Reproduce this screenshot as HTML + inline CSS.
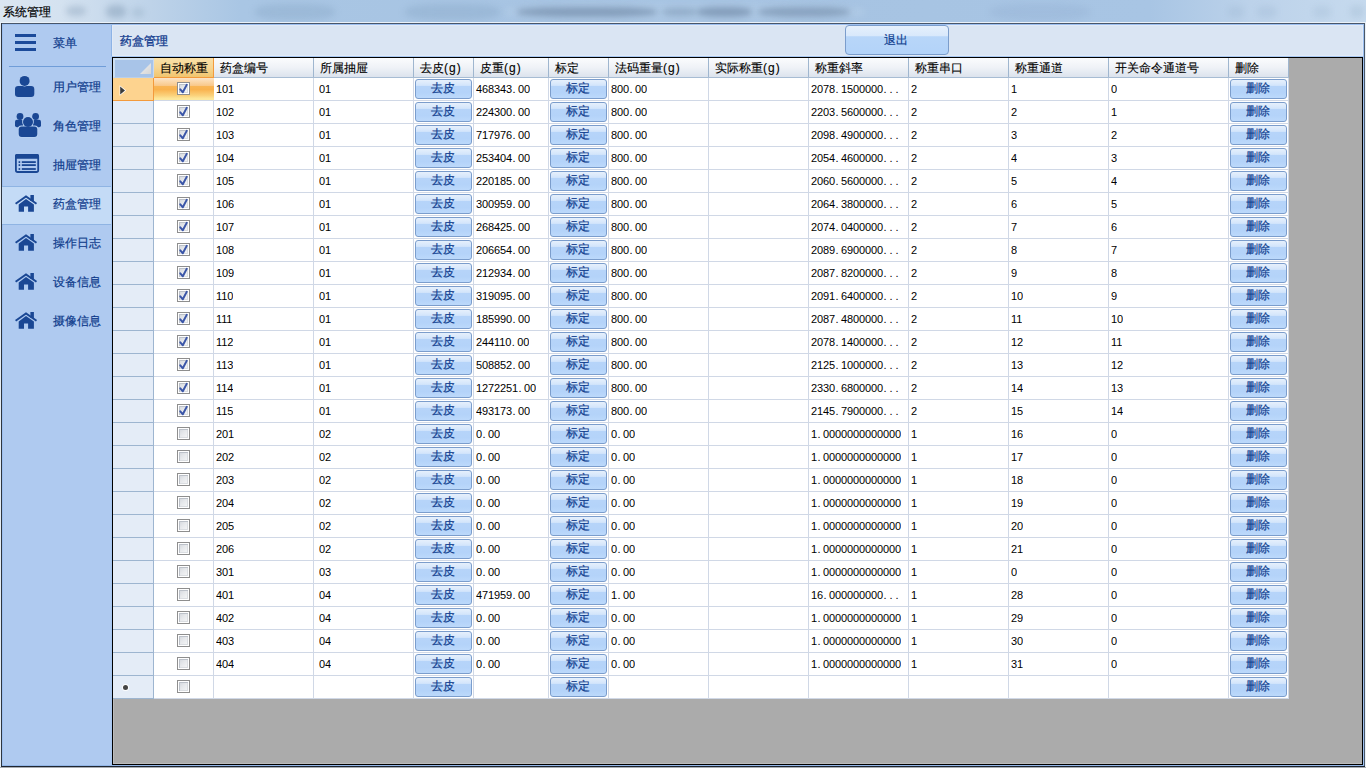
<!DOCTYPE html><html><head><meta charset="utf-8"><style>
*{margin:0;padding:0;box-sizing:border-box}
html,body{width:1366px;height:768px;overflow:hidden}
body{position:relative;background:#a9c5e4;font-family:"Liberation Sans",sans-serif;font-size:12px;color:#000}
.abs{position:absolute}
#title{left:0;top:0;width:1366px;height:22px;background:linear-gradient(90deg,#dbe6f1 0px,#d4e2f0 60px,#bed3e9 150px,#a9c6e4 240px,#a6c3e2 700px,#a8c5e4 1150px,#bcd2ea 1250px,#c6daee 1366px)}
.blob{position:absolute;filter:blur(3px);border-radius:40%}
.cj{-webkit-text-stroke:0.2px currentColor}
#ttxt{left:3px;top:5px;font-size:12px;line-height:14px;color:#000;-webkit-text-stroke:0.2px #000}
#win{left:0;top:22px;width:1366px;height:746px;}
.sb{background:#afcaf0}
.mi{position:absolute;left:2px;width:109px;height:39px}
.mt{position:absolute;left:53px;font-size:12px;line-height:14px;color:#103c8c;-webkit-text-stroke:0.2px #103c8c}
.grid{background:#ababab}
.cell{position:absolute;overflow:hidden;white-space:nowrap}
.num{font-family:"Liberation Sans",sans-serif;font-size:11px;letter-spacing:-0.12px}.num b{display:inline-block;width:6px;font-weight:normal;padding-left:0.5px}
.btn{position:absolute;border:1px solid #7b9dcc;border-radius:3px;background:linear-gradient(#e6f0fc 0%,#d3e5fb 30%,#b6d4f9 36%,#b4d3f9 70%,#bcd9fb 100%);color:#12408f;text-align:center;font-size:12px;line-height:17px;padding-right:2px;-webkit-text-stroke:0.2px #12408f}
.cb{position:absolute;width:13px;height:13px;border:1px solid #8e8e8e;background:#fff}.cb i{position:absolute;left:1px;top:1px;width:9px;height:9px;background:linear-gradient(135deg,#d2d6dc 0%,#e6e8eb 45%,#f6f7f8 100%);box-shadow:inset 1px 1px 0 #bcc1c9,inset -1px -1px 0 #dadde1}
.hd{position:absolute;top:58px;height:19px;background:linear-gradient(#fbfcfd 0%,#eff2f7 50%,#dce3ed 100%);font-size:12px;line-height:21px;padding-left:6px;color:#000;-webkit-text-stroke:0.12px #000}.hd s{text-decoration:none;letter-spacing:1.1px}
</style></head><body>

<div class="abs" id="title"></div>
<div class="blob" style="left:66px;top:6px;width:20px;height:10px;background:rgba(90,120,150,0.25)"></div>
<div class="blob" style="left:106px;top:5px;width:20px;height:13px;background:rgba(90,120,150,0.3)"></div>
<div class="blob" style="left:132px;top:8px;width:12px;height:9px;background:rgba(90,120,150,0.18)"></div>
<div class="blob" style="left:255px;top:4px;width:80px;height:16px;background:rgba(120,150,185,0.25)"></div>
<div class="blob" style="left:405px;top:4px;width:95px;height:16px;background:rgba(120,150,185,0.25)"></div>
<div class="blob" style="left:990px;top:4px;width:100px;height:16px;background:rgba(120,150,185,0.15)"></div>
<div class="blob" style="left:505px;top:3px;width:360px;height:18px;background:rgba(200,220,240,0.25)"></div>
<div class="blob" style="left:517px;top:7px;width:140px;height:10px;background:rgba(80,105,135,0.45)"></div>
<div class="blob" style="left:662px;top:8px;width:35px;height:8px;background:rgba(80,105,135,0.3)"></div>
<div class="blob" style="left:697px;top:7px;width:55px;height:10px;background:rgba(80,105,135,0.45)"></div>
<div class="blob" style="left:758px;top:7px;width:92px;height:10px;background:rgba(80,105,135,0.4)"></div>
<div class="blob" style="left:1228px;top:6px;width:16px;height:12px;background:rgba(110,140,170,0.12)"></div>
<div class="blob" style="left:1257px;top:6px;width:20px;height:12px;background:rgba(110,140,170,0.12)"></div>
<div class="blob" style="left:1313px;top:6px;width:18px;height:12px;background:rgba(110,140,170,0.12)"></div>
<div class="blob" style="left:1350px;top:5px;width:14px;height:13px;background:rgba(110,140,170,0.15)"></div>
<div class="abs" id="ttxt">系统管理</div>
<div class="abs" style="left:0px;top:22px;width:1366px;height:1px;background:#eaf1f8"></div>
<div class="abs" style="left:0px;top:23px;width:1px;height:745px;background:#e4ecf4"></div>
<div class="abs" style="left:1365px;top:23px;width:1px;height:745px;background:#e8f0f8"></div>
<div class="abs" style="left:1px;top:23px;width:1364px;height:1px;background:#48566a"></div>
<div class="abs" style="left:1px;top:23px;width:1px;height:744px;background:#2d3540"></div>
<div class="abs" style="left:1364px;top:23px;width:1px;height:744px;background:#4a5868"></div>
<div class="abs" style="left:1px;top:766px;width:1364px;height:1px;background:#1e2530"></div>
<div class="abs" style="left:0px;top:767px;width:1366px;height:1px;background:#a9adb2"></div>
<div class="abs sb" style="left:2px;top:24px;width:1362px;height:742px"></div>
<div class="abs" style="left:2px;top:24px;width:1362px;height:1px;background:#9cbff0"></div>
<div class="abs" style="left:2px;top:24px;width:1px;height:742px;background:#9cbff0"></div>
<div class="abs" style="left:1363px;top:24px;width:1px;height:742px;background:#9cbff0"></div>
<div class="abs" style="left:2px;top:765px;width:1362px;height:1px;background:#92b6e8"></div>
<div class="abs" style="left:111px;top:25px;width:1px;height:31px;background:#8db3e6"></div>
<div class="abs" style="left:111px;top:56px;width:1px;height:709px;background:#a6c6f2"></div>
<div class="abs" style="left:15px;top:34px;width:21px;height:3px;background:#1b4a9a"></div>
<div class="abs" style="left:15px;top:41px;width:21px;height:3px;background:#1b4a9a"></div>
<div class="abs" style="left:15px;top:48px;width:21px;height:3px;background:#1b4a9a"></div>
<div class="abs mt" style="left:53px;top:36px">菜单</div>
<div class="abs" style="left:9px;top:66px;width:97px;height:1px;background:#709dd8"></div>
<div class="abs" style="left:2px;top:186px;width:109px;height:39px;background:#c4dbf6"></div>
<div class="abs" style="left:2px;top:186px;width:109px;height:1px;background:#8fb4e3"></div>
<div class="abs" style="left:2px;top:224px;width:109px;height:1px;background:#8fb4e3"></div>
<div class="abs mt" style="top:80px">用户管理</div>
<div class="abs mt" style="top:119px">角色管理</div>
<div class="abs mt" style="top:158px">抽屉管理</div>
<div class="abs mt" style="top:197px">药盒管理</div>
<div class="abs mt" style="top:236px">操作日志</div>
<div class="abs mt" style="top:275px">设备信息</div>
<div class="abs mt" style="top:314px">摄像信息</div>
<svg class="abs" style="left:0;top:0" width="112" height="340" viewBox="0 0 112 340"><rect x="15" y="86" width="19.3" height="11" rx="3.2" fill="#1a4794"/><circle cx="24.6" cy="80.9" r="5.6" fill="#b9d2f2"/><circle cx="24.6" cy="80.9" r="5" fill="#1a4794"/><circle cx="20" cy="116.5" r="3.4" fill="#1a4794"/><circle cx="35.6" cy="116.5" r="3.4" fill="#1a4794"/><rect x="15" y="119.8" width="8" height="7.4" rx="2" fill="#1a4794"/><rect x="33" y="119.8" width="8" height="7.4" rx="2" fill="#1a4794"/><circle cx="28" cy="122" r="5.8" fill="#b9d2f2"/><rect x="17.8" y="125.6" width="20.4" height="12.2" rx="3.5" fill="#b9d2f2"/><circle cx="28" cy="122" r="5" fill="#1a4794"/><rect x="18.7" y="126.5" width="18.6" height="10.6" rx="3" fill="#1a4794"/><rect x="15.9" y="154.8" width="22.3" height="17.2" rx="1.8" fill="none" stroke="#1a4794" stroke-width="1.8"/><rect x="15" y="153.9" width="24" height="4.8" rx="1.5" fill="#1a4794"/><rect x="18.6" y="161.2" width="1.6" height="1.8" fill="#1a4794"/><rect x="21.8" y="161.2" width="14" height="1.8" fill="#1a4794"/><rect x="18.6" y="164.2" width="1.6" height="1.8" fill="#1a4794"/><rect x="21.8" y="164.2" width="14" height="1.8" fill="#1a4794"/><rect x="18.6" y="168.1" width="1.6" height="1.8" fill="#1a4794"/><rect x="21.8" y="168.1" width="14" height="1.8" fill="#1a4794"/><path d="M15.6 203.7 L26 196.5 L36.5 203.7" fill="none" stroke="#1a4794" stroke-width="2"/><rect x="30.4" y="195" width="3.5" height="6" fill="#1a4794"/><path d="M26 199 L33.9 204.6 L33.9 211.8 L28.1 211.8 L28.1 206.6 L24 206.6 L24 211.8 L18.7 211.8 L18.7 204.6 Z" fill="#1a4794"/><path d="M15.6 242.7 L26 235.5 L36.5 242.7" fill="none" stroke="#1a4794" stroke-width="2"/><rect x="30.4" y="234" width="3.5" height="6" fill="#1a4794"/><path d="M26 238 L33.9 243.6 L33.9 250.8 L28.1 250.8 L28.1 245.6 L24 245.6 L24 250.8 L18.7 250.8 L18.7 243.6 Z" fill="#1a4794"/><path d="M15.6 281.7 L26 274.5 L36.5 281.7" fill="none" stroke="#1a4794" stroke-width="2"/><rect x="30.4" y="273" width="3.5" height="6" fill="#1a4794"/><path d="M26 277 L33.9 282.6 L33.9 289.8 L28.1 289.8 L28.1 284.6 L24 284.6 L24 289.8 L18.7 289.8 L18.7 282.6 Z" fill="#1a4794"/><path d="M15.6 320.7 L26 313.5 L36.5 320.7" fill="none" stroke="#1a4794" stroke-width="2"/><rect x="30.4" y="312" width="3.5" height="6" fill="#1a4794"/><path d="M26 316 L33.9 321.6 L33.9 328.8 L28.1 328.8 L28.1 323.6 L24 323.6 L24 328.8 L18.7 328.8 L18.7 321.6 Z" fill="#1a4794"/></svg>
<div class="abs" style="left:112px;top:25px;width:1251px;height:31px;background:#dae5f3"></div>
<div class="abs" style="left:112px;top:25px;width:1251px;height:1px;background:#e2eaf5"></div>
<div class="abs" style="left:112px;top:25px;width:1px;height:31px;background:#e2eaf5"></div>
<div class="abs" style="left:1362px;top:25px;width:1px;height:31px;background:#e2eaf5"></div>
<div class="abs" style="left:112px;top:55px;width:1251px;height:1px;background:#e2eaf5"></div>
<div class="abs" style="left:112px;top:56px;width:1251px;height:1px;background:#a8c8f2"></div>
<div class="abs" style="left:120px;top:34px;font-size:12px;line-height:14px;color:#173f90;-webkit-text-stroke:0.35px #173f90">药盒管理</div>
<div class="btn" style="left:845px;top:25px;width:104px;height:30px;line-height:28px;border-radius:4px;background:linear-gradient(#e6f0fc 0%,#d8e8fb 36%,#b8d6f9 38%,#b3d3f9 100%)">退出</div>
<div class="abs grid" style="left:112px;top:57px;width:1251px;height:708px;border:1px solid #000"></div>
<div class="abs" style="left:113px;top:58px;width:1px;height:706px;background:#bcbcbc"></div>
<div class="abs" style="left:113px;top:763px;width:1249px;height:1px;background:#bcbcbc"></div>
<div class="abs" style="left:113px;top:58px;width:41px;height:20px;background:#a8c4e8;border-left:2px solid #cddff1;border-top:2px solid #cddff1;border-right:1px solid #c7d9f1;border-bottom:1px solid #b9cfea"></div>
<svg class="abs" style="left:140px;top:63px" width="11" height="11"><defs><linearGradient id="tg" x1="0" y1="0" x2="1" y2="1"><stop offset="0" stop-color="#f0f0f0"/><stop offset="1" stop-color="#d6d6d6"/></linearGradient></defs><path d="M11 0 L11 11 L0 11Z" fill="url(#tg)"/></svg>
<div class="hd" style="left:154px;width:60px;background:linear-gradient(#f9e0a8 0%,#f7d692 50%,#f1c56f 100%);border-right:1px solid #f39a3c;border-bottom:1px solid #f39a3c;height:20px">自动称重</div>
<div class="hd" style="left:214px;width:99px">药盒编号</div>
<div class="abs" style="left:313px;top:58px;width:1px;height:19px;background:#9fb6cf"></div>
<div class="hd" style="left:314px;width:99px">所属抽屉</div>
<div class="abs" style="left:413px;top:58px;width:1px;height:19px;background:#9fb6cf"></div>
<div class="hd" style="left:414px;width:59px">去皮<s>(g)</s></div>
<div class="abs" style="left:473px;top:58px;width:1px;height:19px;background:#9fb6cf"></div>
<div class="hd" style="left:474px;width:74px">皮重<s>(g)</s></div>
<div class="abs" style="left:548px;top:58px;width:1px;height:19px;background:#9fb6cf"></div>
<div class="hd" style="left:549px;width:59px">标定</div>
<div class="abs" style="left:608px;top:58px;width:1px;height:19px;background:#9fb6cf"></div>
<div class="hd" style="left:609px;width:99px">法码重量<s>(g)</s></div>
<div class="abs" style="left:708px;top:58px;width:1px;height:19px;background:#9fb6cf"></div>
<div class="hd" style="left:709px;width:99px">实际称重<s>(g)</s></div>
<div class="abs" style="left:808px;top:58px;width:1px;height:19px;background:#9fb6cf"></div>
<div class="hd" style="left:809px;width:99px">称重斜率</div>
<div class="abs" style="left:908px;top:58px;width:1px;height:19px;background:#9fb6cf"></div>
<div class="hd" style="left:909px;width:99px">称重串口</div>
<div class="abs" style="left:1008px;top:58px;width:1px;height:19px;background:#9fb6cf"></div>
<div class="hd" style="left:1009px;width:99px">称重通道</div>
<div class="abs" style="left:1108px;top:58px;width:1px;height:19px;background:#9fb6cf"></div>
<div class="hd" style="left:1109px;width:119px">开关命令通道号</div>
<div class="abs" style="left:1228px;top:58px;width:1px;height:19px;background:#9fb6cf"></div>
<div class="hd" style="left:1229px;width:59px">删除</div>
<div class="abs" style="left:1288px;top:58px;width:1px;height:19px;background:#9fb6cf"></div>
<div class="abs" style="left:214px;top:77px;width:1075px;height:1px;background:#a7bcd3"></div>
<div class="abs" style="left:113px;top:78px;width:41px;height:23px;background:#fdd38f;border-right:1px solid #f39a3c;border-bottom:1px solid #f39a3c"></div>
<svg class="abs" style="left:118px;top:84px" width="10" height="14"><path d="M1.6 1.2 L8.2 6.5 L1.6 11.8Z" fill="#fff"/><path d="M2.2 2.4 L7 6.5 L2.2 10.6Z" fill="#3b3b3b"/></svg>
<div class="abs" style="left:154px;top:78px;width:60px;height:22px;background:linear-gradient(#fce4c8 0%,#fbd9ad 15%,#f9c98c 34%,#f9b656 38%,#f9b24e 52%,#fbd27c 80%,#fde597 92%,#fde99f 100%)"></div>
<div class="abs" style="left:214px;top:78px;width:1074px;height:22px;background:#fff"></div>
<div class="abs" style="left:154px;top:100px;width:1134px;height:1px;background:#d0d8e6"></div>
<div class="abs" style="left:213px;top:100px;width:1px;height:1px;background:#d0d8e6"></div>
<div class="abs" style="left:313px;top:78px;width:1px;height:23px;background:#d0d8e6"></div>
<div class="abs" style="left:413px;top:78px;width:1px;height:23px;background:#d0d8e6"></div>
<div class="abs" style="left:473px;top:78px;width:1px;height:23px;background:#d0d8e6"></div>
<div class="abs" style="left:548px;top:78px;width:1px;height:23px;background:#d0d8e6"></div>
<div class="abs" style="left:608px;top:78px;width:1px;height:23px;background:#d0d8e6"></div>
<div class="abs" style="left:708px;top:78px;width:1px;height:23px;background:#d0d8e6"></div>
<div class="abs" style="left:808px;top:78px;width:1px;height:23px;background:#d0d8e6"></div>
<div class="abs" style="left:908px;top:78px;width:1px;height:23px;background:#d0d8e6"></div>
<div class="abs" style="left:1008px;top:78px;width:1px;height:23px;background:#d0d8e6"></div>
<div class="abs" style="left:1108px;top:78px;width:1px;height:23px;background:#d0d8e6"></div>
<div class="abs" style="left:1228px;top:78px;width:1px;height:23px;background:#d0d8e6"></div>
<div class="abs" style="left:1288px;top:78px;width:1px;height:23px;background:#d0d8e6"></div>
<div class="cb" style="left:177px;top:82px"><i></i></div>
<svg class="abs" style="left:178px;top:83px" width="11" height="11"><path d="M2.3 6.3 L4.8 9.3 L8.7 1.9" fill="none" stroke="#3b56a8" stroke-width="2" stroke-linecap="round" stroke-linejoin="round"/></svg>
<div class="btn" style="left:415px;top:79px;width:57px;height:20px">去皮</div>
<div class="btn" style="left:550px;top:79px;width:57px;height:20px">标定</div>
<div class="btn" style="left:1230px;top:79px;width:57px;height:20px">删除</div>
<div class="cell num" style="left:216px;top:83px;line-height:13px">101</div>
<div class="cell num" style="left:319px;top:83px;line-height:13px">01</div>
<div class="cell num" style="left:476px;top:83px;line-height:13px">468343<b>.</b>00</div>
<div class="cell num" style="left:611px;top:83px;line-height:13px">800<b>.</b>00</div>
<div class="cell num" style="left:811px;top:83px;line-height:13px">2078<b>.</b>1500000<b>.</b><b>.</b><b>.</b></div>
<div class="cell num" style="left:911px;top:83px;line-height:13px">2</div>
<div class="cell num" style="left:1011px;top:83px;line-height:13px">1</div>
<div class="cell num" style="left:1111px;top:83px;line-height:13px">0</div>
<div class="abs" style="left:113px;top:101px;width:40px;height:22px;background:#e4ecf7"></div>
<div class="abs" style="left:113px;top:123px;width:40px;height:1px;background:#9db5d0"></div>
<div class="abs" style="left:153px;top:101px;width:1px;height:23px;background:#9db5d0"></div>
<div class="abs" style="left:154px;top:101px;width:59px;height:22px;background:#fff"></div>
<div class="abs" style="left:214px;top:101px;width:1074px;height:22px;background:#fff"></div>
<div class="abs" style="left:154px;top:123px;width:1134px;height:1px;background:#d0d8e6"></div>
<div class="abs" style="left:213px;top:101px;width:1px;height:23px;background:#d0d8e6"></div>
<div class="abs" style="left:313px;top:101px;width:1px;height:23px;background:#d0d8e6"></div>
<div class="abs" style="left:413px;top:101px;width:1px;height:23px;background:#d0d8e6"></div>
<div class="abs" style="left:473px;top:101px;width:1px;height:23px;background:#d0d8e6"></div>
<div class="abs" style="left:548px;top:101px;width:1px;height:23px;background:#d0d8e6"></div>
<div class="abs" style="left:608px;top:101px;width:1px;height:23px;background:#d0d8e6"></div>
<div class="abs" style="left:708px;top:101px;width:1px;height:23px;background:#d0d8e6"></div>
<div class="abs" style="left:808px;top:101px;width:1px;height:23px;background:#d0d8e6"></div>
<div class="abs" style="left:908px;top:101px;width:1px;height:23px;background:#d0d8e6"></div>
<div class="abs" style="left:1008px;top:101px;width:1px;height:23px;background:#d0d8e6"></div>
<div class="abs" style="left:1108px;top:101px;width:1px;height:23px;background:#d0d8e6"></div>
<div class="abs" style="left:1228px;top:101px;width:1px;height:23px;background:#d0d8e6"></div>
<div class="abs" style="left:1288px;top:101px;width:1px;height:23px;background:#d0d8e6"></div>
<div class="cb" style="left:177px;top:105px"><i></i></div>
<svg class="abs" style="left:178px;top:106px" width="11" height="11"><path d="M2.3 6.3 L4.8 9.3 L8.7 1.9" fill="none" stroke="#3b56a8" stroke-width="2" stroke-linecap="round" stroke-linejoin="round"/></svg>
<div class="btn" style="left:415px;top:102px;width:57px;height:20px">去皮</div>
<div class="btn" style="left:550px;top:102px;width:57px;height:20px">标定</div>
<div class="btn" style="left:1230px;top:102px;width:57px;height:20px">删除</div>
<div class="cell num" style="left:216px;top:106px;line-height:13px">102</div>
<div class="cell num" style="left:319px;top:106px;line-height:13px">01</div>
<div class="cell num" style="left:476px;top:106px;line-height:13px">224300<b>.</b>00</div>
<div class="cell num" style="left:611px;top:106px;line-height:13px">800<b>.</b>00</div>
<div class="cell num" style="left:811px;top:106px;line-height:13px">2203<b>.</b>5600000<b>.</b><b>.</b><b>.</b></div>
<div class="cell num" style="left:911px;top:106px;line-height:13px">2</div>
<div class="cell num" style="left:1011px;top:106px;line-height:13px">2</div>
<div class="cell num" style="left:1111px;top:106px;line-height:13px">1</div>
<div class="abs" style="left:113px;top:124px;width:40px;height:22px;background:#e4ecf7"></div>
<div class="abs" style="left:113px;top:146px;width:40px;height:1px;background:#9db5d0"></div>
<div class="abs" style="left:153px;top:124px;width:1px;height:23px;background:#9db5d0"></div>
<div class="abs" style="left:154px;top:124px;width:59px;height:22px;background:#fff"></div>
<div class="abs" style="left:214px;top:124px;width:1074px;height:22px;background:#fff"></div>
<div class="abs" style="left:154px;top:146px;width:1134px;height:1px;background:#d0d8e6"></div>
<div class="abs" style="left:213px;top:124px;width:1px;height:23px;background:#d0d8e6"></div>
<div class="abs" style="left:313px;top:124px;width:1px;height:23px;background:#d0d8e6"></div>
<div class="abs" style="left:413px;top:124px;width:1px;height:23px;background:#d0d8e6"></div>
<div class="abs" style="left:473px;top:124px;width:1px;height:23px;background:#d0d8e6"></div>
<div class="abs" style="left:548px;top:124px;width:1px;height:23px;background:#d0d8e6"></div>
<div class="abs" style="left:608px;top:124px;width:1px;height:23px;background:#d0d8e6"></div>
<div class="abs" style="left:708px;top:124px;width:1px;height:23px;background:#d0d8e6"></div>
<div class="abs" style="left:808px;top:124px;width:1px;height:23px;background:#d0d8e6"></div>
<div class="abs" style="left:908px;top:124px;width:1px;height:23px;background:#d0d8e6"></div>
<div class="abs" style="left:1008px;top:124px;width:1px;height:23px;background:#d0d8e6"></div>
<div class="abs" style="left:1108px;top:124px;width:1px;height:23px;background:#d0d8e6"></div>
<div class="abs" style="left:1228px;top:124px;width:1px;height:23px;background:#d0d8e6"></div>
<div class="abs" style="left:1288px;top:124px;width:1px;height:23px;background:#d0d8e6"></div>
<div class="cb" style="left:177px;top:128px"><i></i></div>
<svg class="abs" style="left:178px;top:129px" width="11" height="11"><path d="M2.3 6.3 L4.8 9.3 L8.7 1.9" fill="none" stroke="#3b56a8" stroke-width="2" stroke-linecap="round" stroke-linejoin="round"/></svg>
<div class="btn" style="left:415px;top:125px;width:57px;height:20px">去皮</div>
<div class="btn" style="left:550px;top:125px;width:57px;height:20px">标定</div>
<div class="btn" style="left:1230px;top:125px;width:57px;height:20px">删除</div>
<div class="cell num" style="left:216px;top:129px;line-height:13px">103</div>
<div class="cell num" style="left:319px;top:129px;line-height:13px">01</div>
<div class="cell num" style="left:476px;top:129px;line-height:13px">717976<b>.</b>00</div>
<div class="cell num" style="left:611px;top:129px;line-height:13px">800<b>.</b>00</div>
<div class="cell num" style="left:811px;top:129px;line-height:13px">2098<b>.</b>4900000<b>.</b><b>.</b><b>.</b></div>
<div class="cell num" style="left:911px;top:129px;line-height:13px">2</div>
<div class="cell num" style="left:1011px;top:129px;line-height:13px">3</div>
<div class="cell num" style="left:1111px;top:129px;line-height:13px">2</div>
<div class="abs" style="left:113px;top:147px;width:40px;height:22px;background:#e4ecf7"></div>
<div class="abs" style="left:113px;top:169px;width:40px;height:1px;background:#9db5d0"></div>
<div class="abs" style="left:153px;top:147px;width:1px;height:23px;background:#9db5d0"></div>
<div class="abs" style="left:154px;top:147px;width:59px;height:22px;background:#fff"></div>
<div class="abs" style="left:214px;top:147px;width:1074px;height:22px;background:#fff"></div>
<div class="abs" style="left:154px;top:169px;width:1134px;height:1px;background:#d0d8e6"></div>
<div class="abs" style="left:213px;top:147px;width:1px;height:23px;background:#d0d8e6"></div>
<div class="abs" style="left:313px;top:147px;width:1px;height:23px;background:#d0d8e6"></div>
<div class="abs" style="left:413px;top:147px;width:1px;height:23px;background:#d0d8e6"></div>
<div class="abs" style="left:473px;top:147px;width:1px;height:23px;background:#d0d8e6"></div>
<div class="abs" style="left:548px;top:147px;width:1px;height:23px;background:#d0d8e6"></div>
<div class="abs" style="left:608px;top:147px;width:1px;height:23px;background:#d0d8e6"></div>
<div class="abs" style="left:708px;top:147px;width:1px;height:23px;background:#d0d8e6"></div>
<div class="abs" style="left:808px;top:147px;width:1px;height:23px;background:#d0d8e6"></div>
<div class="abs" style="left:908px;top:147px;width:1px;height:23px;background:#d0d8e6"></div>
<div class="abs" style="left:1008px;top:147px;width:1px;height:23px;background:#d0d8e6"></div>
<div class="abs" style="left:1108px;top:147px;width:1px;height:23px;background:#d0d8e6"></div>
<div class="abs" style="left:1228px;top:147px;width:1px;height:23px;background:#d0d8e6"></div>
<div class="abs" style="left:1288px;top:147px;width:1px;height:23px;background:#d0d8e6"></div>
<div class="cb" style="left:177px;top:151px"><i></i></div>
<svg class="abs" style="left:178px;top:152px" width="11" height="11"><path d="M2.3 6.3 L4.8 9.3 L8.7 1.9" fill="none" stroke="#3b56a8" stroke-width="2" stroke-linecap="round" stroke-linejoin="round"/></svg>
<div class="btn" style="left:415px;top:148px;width:57px;height:20px">去皮</div>
<div class="btn" style="left:550px;top:148px;width:57px;height:20px">标定</div>
<div class="btn" style="left:1230px;top:148px;width:57px;height:20px">删除</div>
<div class="cell num" style="left:216px;top:152px;line-height:13px">104</div>
<div class="cell num" style="left:319px;top:152px;line-height:13px">01</div>
<div class="cell num" style="left:476px;top:152px;line-height:13px">253404<b>.</b>00</div>
<div class="cell num" style="left:611px;top:152px;line-height:13px">800<b>.</b>00</div>
<div class="cell num" style="left:811px;top:152px;line-height:13px">2054<b>.</b>4600000<b>.</b><b>.</b><b>.</b></div>
<div class="cell num" style="left:911px;top:152px;line-height:13px">2</div>
<div class="cell num" style="left:1011px;top:152px;line-height:13px">4</div>
<div class="cell num" style="left:1111px;top:152px;line-height:13px">3</div>
<div class="abs" style="left:113px;top:170px;width:40px;height:22px;background:#e4ecf7"></div>
<div class="abs" style="left:113px;top:192px;width:40px;height:1px;background:#9db5d0"></div>
<div class="abs" style="left:153px;top:170px;width:1px;height:23px;background:#9db5d0"></div>
<div class="abs" style="left:154px;top:170px;width:59px;height:22px;background:#fff"></div>
<div class="abs" style="left:214px;top:170px;width:1074px;height:22px;background:#fff"></div>
<div class="abs" style="left:154px;top:192px;width:1134px;height:1px;background:#d0d8e6"></div>
<div class="abs" style="left:213px;top:170px;width:1px;height:23px;background:#d0d8e6"></div>
<div class="abs" style="left:313px;top:170px;width:1px;height:23px;background:#d0d8e6"></div>
<div class="abs" style="left:413px;top:170px;width:1px;height:23px;background:#d0d8e6"></div>
<div class="abs" style="left:473px;top:170px;width:1px;height:23px;background:#d0d8e6"></div>
<div class="abs" style="left:548px;top:170px;width:1px;height:23px;background:#d0d8e6"></div>
<div class="abs" style="left:608px;top:170px;width:1px;height:23px;background:#d0d8e6"></div>
<div class="abs" style="left:708px;top:170px;width:1px;height:23px;background:#d0d8e6"></div>
<div class="abs" style="left:808px;top:170px;width:1px;height:23px;background:#d0d8e6"></div>
<div class="abs" style="left:908px;top:170px;width:1px;height:23px;background:#d0d8e6"></div>
<div class="abs" style="left:1008px;top:170px;width:1px;height:23px;background:#d0d8e6"></div>
<div class="abs" style="left:1108px;top:170px;width:1px;height:23px;background:#d0d8e6"></div>
<div class="abs" style="left:1228px;top:170px;width:1px;height:23px;background:#d0d8e6"></div>
<div class="abs" style="left:1288px;top:170px;width:1px;height:23px;background:#d0d8e6"></div>
<div class="cb" style="left:177px;top:174px"><i></i></div>
<svg class="abs" style="left:178px;top:175px" width="11" height="11"><path d="M2.3 6.3 L4.8 9.3 L8.7 1.9" fill="none" stroke="#3b56a8" stroke-width="2" stroke-linecap="round" stroke-linejoin="round"/></svg>
<div class="btn" style="left:415px;top:171px;width:57px;height:20px">去皮</div>
<div class="btn" style="left:550px;top:171px;width:57px;height:20px">标定</div>
<div class="btn" style="left:1230px;top:171px;width:57px;height:20px">删除</div>
<div class="cell num" style="left:216px;top:175px;line-height:13px">105</div>
<div class="cell num" style="left:319px;top:175px;line-height:13px">01</div>
<div class="cell num" style="left:476px;top:175px;line-height:13px">220185<b>.</b>00</div>
<div class="cell num" style="left:611px;top:175px;line-height:13px">800<b>.</b>00</div>
<div class="cell num" style="left:811px;top:175px;line-height:13px">2060<b>.</b>5600000<b>.</b><b>.</b><b>.</b></div>
<div class="cell num" style="left:911px;top:175px;line-height:13px">2</div>
<div class="cell num" style="left:1011px;top:175px;line-height:13px">5</div>
<div class="cell num" style="left:1111px;top:175px;line-height:13px">4</div>
<div class="abs" style="left:113px;top:193px;width:40px;height:22px;background:#e4ecf7"></div>
<div class="abs" style="left:113px;top:215px;width:40px;height:1px;background:#9db5d0"></div>
<div class="abs" style="left:153px;top:193px;width:1px;height:23px;background:#9db5d0"></div>
<div class="abs" style="left:154px;top:193px;width:59px;height:22px;background:#fff"></div>
<div class="abs" style="left:214px;top:193px;width:1074px;height:22px;background:#fff"></div>
<div class="abs" style="left:154px;top:215px;width:1134px;height:1px;background:#d0d8e6"></div>
<div class="abs" style="left:213px;top:193px;width:1px;height:23px;background:#d0d8e6"></div>
<div class="abs" style="left:313px;top:193px;width:1px;height:23px;background:#d0d8e6"></div>
<div class="abs" style="left:413px;top:193px;width:1px;height:23px;background:#d0d8e6"></div>
<div class="abs" style="left:473px;top:193px;width:1px;height:23px;background:#d0d8e6"></div>
<div class="abs" style="left:548px;top:193px;width:1px;height:23px;background:#d0d8e6"></div>
<div class="abs" style="left:608px;top:193px;width:1px;height:23px;background:#d0d8e6"></div>
<div class="abs" style="left:708px;top:193px;width:1px;height:23px;background:#d0d8e6"></div>
<div class="abs" style="left:808px;top:193px;width:1px;height:23px;background:#d0d8e6"></div>
<div class="abs" style="left:908px;top:193px;width:1px;height:23px;background:#d0d8e6"></div>
<div class="abs" style="left:1008px;top:193px;width:1px;height:23px;background:#d0d8e6"></div>
<div class="abs" style="left:1108px;top:193px;width:1px;height:23px;background:#d0d8e6"></div>
<div class="abs" style="left:1228px;top:193px;width:1px;height:23px;background:#d0d8e6"></div>
<div class="abs" style="left:1288px;top:193px;width:1px;height:23px;background:#d0d8e6"></div>
<div class="cb" style="left:177px;top:197px"><i></i></div>
<svg class="abs" style="left:178px;top:198px" width="11" height="11"><path d="M2.3 6.3 L4.8 9.3 L8.7 1.9" fill="none" stroke="#3b56a8" stroke-width="2" stroke-linecap="round" stroke-linejoin="round"/></svg>
<div class="btn" style="left:415px;top:194px;width:57px;height:20px">去皮</div>
<div class="btn" style="left:550px;top:194px;width:57px;height:20px">标定</div>
<div class="btn" style="left:1230px;top:194px;width:57px;height:20px">删除</div>
<div class="cell num" style="left:216px;top:198px;line-height:13px">106</div>
<div class="cell num" style="left:319px;top:198px;line-height:13px">01</div>
<div class="cell num" style="left:476px;top:198px;line-height:13px">300959<b>.</b>00</div>
<div class="cell num" style="left:611px;top:198px;line-height:13px">800<b>.</b>00</div>
<div class="cell num" style="left:811px;top:198px;line-height:13px">2064<b>.</b>3800000<b>.</b><b>.</b><b>.</b></div>
<div class="cell num" style="left:911px;top:198px;line-height:13px">2</div>
<div class="cell num" style="left:1011px;top:198px;line-height:13px">6</div>
<div class="cell num" style="left:1111px;top:198px;line-height:13px">5</div>
<div class="abs" style="left:113px;top:216px;width:40px;height:22px;background:#e4ecf7"></div>
<div class="abs" style="left:113px;top:238px;width:40px;height:1px;background:#9db5d0"></div>
<div class="abs" style="left:153px;top:216px;width:1px;height:23px;background:#9db5d0"></div>
<div class="abs" style="left:154px;top:216px;width:59px;height:22px;background:#fff"></div>
<div class="abs" style="left:214px;top:216px;width:1074px;height:22px;background:#fff"></div>
<div class="abs" style="left:154px;top:238px;width:1134px;height:1px;background:#d0d8e6"></div>
<div class="abs" style="left:213px;top:216px;width:1px;height:23px;background:#d0d8e6"></div>
<div class="abs" style="left:313px;top:216px;width:1px;height:23px;background:#d0d8e6"></div>
<div class="abs" style="left:413px;top:216px;width:1px;height:23px;background:#d0d8e6"></div>
<div class="abs" style="left:473px;top:216px;width:1px;height:23px;background:#d0d8e6"></div>
<div class="abs" style="left:548px;top:216px;width:1px;height:23px;background:#d0d8e6"></div>
<div class="abs" style="left:608px;top:216px;width:1px;height:23px;background:#d0d8e6"></div>
<div class="abs" style="left:708px;top:216px;width:1px;height:23px;background:#d0d8e6"></div>
<div class="abs" style="left:808px;top:216px;width:1px;height:23px;background:#d0d8e6"></div>
<div class="abs" style="left:908px;top:216px;width:1px;height:23px;background:#d0d8e6"></div>
<div class="abs" style="left:1008px;top:216px;width:1px;height:23px;background:#d0d8e6"></div>
<div class="abs" style="left:1108px;top:216px;width:1px;height:23px;background:#d0d8e6"></div>
<div class="abs" style="left:1228px;top:216px;width:1px;height:23px;background:#d0d8e6"></div>
<div class="abs" style="left:1288px;top:216px;width:1px;height:23px;background:#d0d8e6"></div>
<div class="cb" style="left:177px;top:220px"><i></i></div>
<svg class="abs" style="left:178px;top:221px" width="11" height="11"><path d="M2.3 6.3 L4.8 9.3 L8.7 1.9" fill="none" stroke="#3b56a8" stroke-width="2" stroke-linecap="round" stroke-linejoin="round"/></svg>
<div class="btn" style="left:415px;top:217px;width:57px;height:20px">去皮</div>
<div class="btn" style="left:550px;top:217px;width:57px;height:20px">标定</div>
<div class="btn" style="left:1230px;top:217px;width:57px;height:20px">删除</div>
<div class="cell num" style="left:216px;top:221px;line-height:13px">107</div>
<div class="cell num" style="left:319px;top:221px;line-height:13px">01</div>
<div class="cell num" style="left:476px;top:221px;line-height:13px">268425<b>.</b>00</div>
<div class="cell num" style="left:611px;top:221px;line-height:13px">800<b>.</b>00</div>
<div class="cell num" style="left:811px;top:221px;line-height:13px">2074<b>.</b>0400000<b>.</b><b>.</b><b>.</b></div>
<div class="cell num" style="left:911px;top:221px;line-height:13px">2</div>
<div class="cell num" style="left:1011px;top:221px;line-height:13px">7</div>
<div class="cell num" style="left:1111px;top:221px;line-height:13px">6</div>
<div class="abs" style="left:113px;top:239px;width:40px;height:22px;background:#e4ecf7"></div>
<div class="abs" style="left:113px;top:261px;width:40px;height:1px;background:#9db5d0"></div>
<div class="abs" style="left:153px;top:239px;width:1px;height:23px;background:#9db5d0"></div>
<div class="abs" style="left:154px;top:239px;width:59px;height:22px;background:#fff"></div>
<div class="abs" style="left:214px;top:239px;width:1074px;height:22px;background:#fff"></div>
<div class="abs" style="left:154px;top:261px;width:1134px;height:1px;background:#d0d8e6"></div>
<div class="abs" style="left:213px;top:239px;width:1px;height:23px;background:#d0d8e6"></div>
<div class="abs" style="left:313px;top:239px;width:1px;height:23px;background:#d0d8e6"></div>
<div class="abs" style="left:413px;top:239px;width:1px;height:23px;background:#d0d8e6"></div>
<div class="abs" style="left:473px;top:239px;width:1px;height:23px;background:#d0d8e6"></div>
<div class="abs" style="left:548px;top:239px;width:1px;height:23px;background:#d0d8e6"></div>
<div class="abs" style="left:608px;top:239px;width:1px;height:23px;background:#d0d8e6"></div>
<div class="abs" style="left:708px;top:239px;width:1px;height:23px;background:#d0d8e6"></div>
<div class="abs" style="left:808px;top:239px;width:1px;height:23px;background:#d0d8e6"></div>
<div class="abs" style="left:908px;top:239px;width:1px;height:23px;background:#d0d8e6"></div>
<div class="abs" style="left:1008px;top:239px;width:1px;height:23px;background:#d0d8e6"></div>
<div class="abs" style="left:1108px;top:239px;width:1px;height:23px;background:#d0d8e6"></div>
<div class="abs" style="left:1228px;top:239px;width:1px;height:23px;background:#d0d8e6"></div>
<div class="abs" style="left:1288px;top:239px;width:1px;height:23px;background:#d0d8e6"></div>
<div class="cb" style="left:177px;top:243px"><i></i></div>
<svg class="abs" style="left:178px;top:244px" width="11" height="11"><path d="M2.3 6.3 L4.8 9.3 L8.7 1.9" fill="none" stroke="#3b56a8" stroke-width="2" stroke-linecap="round" stroke-linejoin="round"/></svg>
<div class="btn" style="left:415px;top:240px;width:57px;height:20px">去皮</div>
<div class="btn" style="left:550px;top:240px;width:57px;height:20px">标定</div>
<div class="btn" style="left:1230px;top:240px;width:57px;height:20px">删除</div>
<div class="cell num" style="left:216px;top:244px;line-height:13px">108</div>
<div class="cell num" style="left:319px;top:244px;line-height:13px">01</div>
<div class="cell num" style="left:476px;top:244px;line-height:13px">206654<b>.</b>00</div>
<div class="cell num" style="left:611px;top:244px;line-height:13px">800<b>.</b>00</div>
<div class="cell num" style="left:811px;top:244px;line-height:13px">2089<b>.</b>6900000<b>.</b><b>.</b><b>.</b></div>
<div class="cell num" style="left:911px;top:244px;line-height:13px">2</div>
<div class="cell num" style="left:1011px;top:244px;line-height:13px">8</div>
<div class="cell num" style="left:1111px;top:244px;line-height:13px">7</div>
<div class="abs" style="left:113px;top:262px;width:40px;height:22px;background:#e4ecf7"></div>
<div class="abs" style="left:113px;top:284px;width:40px;height:1px;background:#9db5d0"></div>
<div class="abs" style="left:153px;top:262px;width:1px;height:23px;background:#9db5d0"></div>
<div class="abs" style="left:154px;top:262px;width:59px;height:22px;background:#fff"></div>
<div class="abs" style="left:214px;top:262px;width:1074px;height:22px;background:#fff"></div>
<div class="abs" style="left:154px;top:284px;width:1134px;height:1px;background:#d0d8e6"></div>
<div class="abs" style="left:213px;top:262px;width:1px;height:23px;background:#d0d8e6"></div>
<div class="abs" style="left:313px;top:262px;width:1px;height:23px;background:#d0d8e6"></div>
<div class="abs" style="left:413px;top:262px;width:1px;height:23px;background:#d0d8e6"></div>
<div class="abs" style="left:473px;top:262px;width:1px;height:23px;background:#d0d8e6"></div>
<div class="abs" style="left:548px;top:262px;width:1px;height:23px;background:#d0d8e6"></div>
<div class="abs" style="left:608px;top:262px;width:1px;height:23px;background:#d0d8e6"></div>
<div class="abs" style="left:708px;top:262px;width:1px;height:23px;background:#d0d8e6"></div>
<div class="abs" style="left:808px;top:262px;width:1px;height:23px;background:#d0d8e6"></div>
<div class="abs" style="left:908px;top:262px;width:1px;height:23px;background:#d0d8e6"></div>
<div class="abs" style="left:1008px;top:262px;width:1px;height:23px;background:#d0d8e6"></div>
<div class="abs" style="left:1108px;top:262px;width:1px;height:23px;background:#d0d8e6"></div>
<div class="abs" style="left:1228px;top:262px;width:1px;height:23px;background:#d0d8e6"></div>
<div class="abs" style="left:1288px;top:262px;width:1px;height:23px;background:#d0d8e6"></div>
<div class="cb" style="left:177px;top:266px"><i></i></div>
<svg class="abs" style="left:178px;top:267px" width="11" height="11"><path d="M2.3 6.3 L4.8 9.3 L8.7 1.9" fill="none" stroke="#3b56a8" stroke-width="2" stroke-linecap="round" stroke-linejoin="round"/></svg>
<div class="btn" style="left:415px;top:263px;width:57px;height:20px">去皮</div>
<div class="btn" style="left:550px;top:263px;width:57px;height:20px">标定</div>
<div class="btn" style="left:1230px;top:263px;width:57px;height:20px">删除</div>
<div class="cell num" style="left:216px;top:267px;line-height:13px">109</div>
<div class="cell num" style="left:319px;top:267px;line-height:13px">01</div>
<div class="cell num" style="left:476px;top:267px;line-height:13px">212934<b>.</b>00</div>
<div class="cell num" style="left:611px;top:267px;line-height:13px">800<b>.</b>00</div>
<div class="cell num" style="left:811px;top:267px;line-height:13px">2087<b>.</b>8200000<b>.</b><b>.</b><b>.</b></div>
<div class="cell num" style="left:911px;top:267px;line-height:13px">2</div>
<div class="cell num" style="left:1011px;top:267px;line-height:13px">9</div>
<div class="cell num" style="left:1111px;top:267px;line-height:13px">8</div>
<div class="abs" style="left:113px;top:285px;width:40px;height:22px;background:#e4ecf7"></div>
<div class="abs" style="left:113px;top:307px;width:40px;height:1px;background:#9db5d0"></div>
<div class="abs" style="left:153px;top:285px;width:1px;height:23px;background:#9db5d0"></div>
<div class="abs" style="left:154px;top:285px;width:59px;height:22px;background:#fff"></div>
<div class="abs" style="left:214px;top:285px;width:1074px;height:22px;background:#fff"></div>
<div class="abs" style="left:154px;top:307px;width:1134px;height:1px;background:#d0d8e6"></div>
<div class="abs" style="left:213px;top:285px;width:1px;height:23px;background:#d0d8e6"></div>
<div class="abs" style="left:313px;top:285px;width:1px;height:23px;background:#d0d8e6"></div>
<div class="abs" style="left:413px;top:285px;width:1px;height:23px;background:#d0d8e6"></div>
<div class="abs" style="left:473px;top:285px;width:1px;height:23px;background:#d0d8e6"></div>
<div class="abs" style="left:548px;top:285px;width:1px;height:23px;background:#d0d8e6"></div>
<div class="abs" style="left:608px;top:285px;width:1px;height:23px;background:#d0d8e6"></div>
<div class="abs" style="left:708px;top:285px;width:1px;height:23px;background:#d0d8e6"></div>
<div class="abs" style="left:808px;top:285px;width:1px;height:23px;background:#d0d8e6"></div>
<div class="abs" style="left:908px;top:285px;width:1px;height:23px;background:#d0d8e6"></div>
<div class="abs" style="left:1008px;top:285px;width:1px;height:23px;background:#d0d8e6"></div>
<div class="abs" style="left:1108px;top:285px;width:1px;height:23px;background:#d0d8e6"></div>
<div class="abs" style="left:1228px;top:285px;width:1px;height:23px;background:#d0d8e6"></div>
<div class="abs" style="left:1288px;top:285px;width:1px;height:23px;background:#d0d8e6"></div>
<div class="cb" style="left:177px;top:289px"><i></i></div>
<svg class="abs" style="left:178px;top:290px" width="11" height="11"><path d="M2.3 6.3 L4.8 9.3 L8.7 1.9" fill="none" stroke="#3b56a8" stroke-width="2" stroke-linecap="round" stroke-linejoin="round"/></svg>
<div class="btn" style="left:415px;top:286px;width:57px;height:20px">去皮</div>
<div class="btn" style="left:550px;top:286px;width:57px;height:20px">标定</div>
<div class="btn" style="left:1230px;top:286px;width:57px;height:20px">删除</div>
<div class="cell num" style="left:216px;top:290px;line-height:13px">110</div>
<div class="cell num" style="left:319px;top:290px;line-height:13px">01</div>
<div class="cell num" style="left:476px;top:290px;line-height:13px">319095<b>.</b>00</div>
<div class="cell num" style="left:611px;top:290px;line-height:13px">800<b>.</b>00</div>
<div class="cell num" style="left:811px;top:290px;line-height:13px">2091<b>.</b>6400000<b>.</b><b>.</b><b>.</b></div>
<div class="cell num" style="left:911px;top:290px;line-height:13px">2</div>
<div class="cell num" style="left:1011px;top:290px;line-height:13px">10</div>
<div class="cell num" style="left:1111px;top:290px;line-height:13px">9</div>
<div class="abs" style="left:113px;top:308px;width:40px;height:22px;background:#e4ecf7"></div>
<div class="abs" style="left:113px;top:330px;width:40px;height:1px;background:#9db5d0"></div>
<div class="abs" style="left:153px;top:308px;width:1px;height:23px;background:#9db5d0"></div>
<div class="abs" style="left:154px;top:308px;width:59px;height:22px;background:#fff"></div>
<div class="abs" style="left:214px;top:308px;width:1074px;height:22px;background:#fff"></div>
<div class="abs" style="left:154px;top:330px;width:1134px;height:1px;background:#d0d8e6"></div>
<div class="abs" style="left:213px;top:308px;width:1px;height:23px;background:#d0d8e6"></div>
<div class="abs" style="left:313px;top:308px;width:1px;height:23px;background:#d0d8e6"></div>
<div class="abs" style="left:413px;top:308px;width:1px;height:23px;background:#d0d8e6"></div>
<div class="abs" style="left:473px;top:308px;width:1px;height:23px;background:#d0d8e6"></div>
<div class="abs" style="left:548px;top:308px;width:1px;height:23px;background:#d0d8e6"></div>
<div class="abs" style="left:608px;top:308px;width:1px;height:23px;background:#d0d8e6"></div>
<div class="abs" style="left:708px;top:308px;width:1px;height:23px;background:#d0d8e6"></div>
<div class="abs" style="left:808px;top:308px;width:1px;height:23px;background:#d0d8e6"></div>
<div class="abs" style="left:908px;top:308px;width:1px;height:23px;background:#d0d8e6"></div>
<div class="abs" style="left:1008px;top:308px;width:1px;height:23px;background:#d0d8e6"></div>
<div class="abs" style="left:1108px;top:308px;width:1px;height:23px;background:#d0d8e6"></div>
<div class="abs" style="left:1228px;top:308px;width:1px;height:23px;background:#d0d8e6"></div>
<div class="abs" style="left:1288px;top:308px;width:1px;height:23px;background:#d0d8e6"></div>
<div class="cb" style="left:177px;top:312px"><i></i></div>
<svg class="abs" style="left:178px;top:313px" width="11" height="11"><path d="M2.3 6.3 L4.8 9.3 L8.7 1.9" fill="none" stroke="#3b56a8" stroke-width="2" stroke-linecap="round" stroke-linejoin="round"/></svg>
<div class="btn" style="left:415px;top:309px;width:57px;height:20px">去皮</div>
<div class="btn" style="left:550px;top:309px;width:57px;height:20px">标定</div>
<div class="btn" style="left:1230px;top:309px;width:57px;height:20px">删除</div>
<div class="cell num" style="left:216px;top:313px;line-height:13px">111</div>
<div class="cell num" style="left:319px;top:313px;line-height:13px">01</div>
<div class="cell num" style="left:476px;top:313px;line-height:13px">185990<b>.</b>00</div>
<div class="cell num" style="left:611px;top:313px;line-height:13px">800<b>.</b>00</div>
<div class="cell num" style="left:811px;top:313px;line-height:13px">2087<b>.</b>4800000<b>.</b><b>.</b><b>.</b></div>
<div class="cell num" style="left:911px;top:313px;line-height:13px">2</div>
<div class="cell num" style="left:1011px;top:313px;line-height:13px">11</div>
<div class="cell num" style="left:1111px;top:313px;line-height:13px">10</div>
<div class="abs" style="left:113px;top:331px;width:40px;height:22px;background:#e4ecf7"></div>
<div class="abs" style="left:113px;top:353px;width:40px;height:1px;background:#9db5d0"></div>
<div class="abs" style="left:153px;top:331px;width:1px;height:23px;background:#9db5d0"></div>
<div class="abs" style="left:154px;top:331px;width:59px;height:22px;background:#fff"></div>
<div class="abs" style="left:214px;top:331px;width:1074px;height:22px;background:#fff"></div>
<div class="abs" style="left:154px;top:353px;width:1134px;height:1px;background:#d0d8e6"></div>
<div class="abs" style="left:213px;top:331px;width:1px;height:23px;background:#d0d8e6"></div>
<div class="abs" style="left:313px;top:331px;width:1px;height:23px;background:#d0d8e6"></div>
<div class="abs" style="left:413px;top:331px;width:1px;height:23px;background:#d0d8e6"></div>
<div class="abs" style="left:473px;top:331px;width:1px;height:23px;background:#d0d8e6"></div>
<div class="abs" style="left:548px;top:331px;width:1px;height:23px;background:#d0d8e6"></div>
<div class="abs" style="left:608px;top:331px;width:1px;height:23px;background:#d0d8e6"></div>
<div class="abs" style="left:708px;top:331px;width:1px;height:23px;background:#d0d8e6"></div>
<div class="abs" style="left:808px;top:331px;width:1px;height:23px;background:#d0d8e6"></div>
<div class="abs" style="left:908px;top:331px;width:1px;height:23px;background:#d0d8e6"></div>
<div class="abs" style="left:1008px;top:331px;width:1px;height:23px;background:#d0d8e6"></div>
<div class="abs" style="left:1108px;top:331px;width:1px;height:23px;background:#d0d8e6"></div>
<div class="abs" style="left:1228px;top:331px;width:1px;height:23px;background:#d0d8e6"></div>
<div class="abs" style="left:1288px;top:331px;width:1px;height:23px;background:#d0d8e6"></div>
<div class="cb" style="left:177px;top:335px"><i></i></div>
<svg class="abs" style="left:178px;top:336px" width="11" height="11"><path d="M2.3 6.3 L4.8 9.3 L8.7 1.9" fill="none" stroke="#3b56a8" stroke-width="2" stroke-linecap="round" stroke-linejoin="round"/></svg>
<div class="btn" style="left:415px;top:332px;width:57px;height:20px">去皮</div>
<div class="btn" style="left:550px;top:332px;width:57px;height:20px">标定</div>
<div class="btn" style="left:1230px;top:332px;width:57px;height:20px">删除</div>
<div class="cell num" style="left:216px;top:336px;line-height:13px">112</div>
<div class="cell num" style="left:319px;top:336px;line-height:13px">01</div>
<div class="cell num" style="left:476px;top:336px;line-height:13px">244110<b>.</b>00</div>
<div class="cell num" style="left:611px;top:336px;line-height:13px">800<b>.</b>00</div>
<div class="cell num" style="left:811px;top:336px;line-height:13px">2078<b>.</b>1400000<b>.</b><b>.</b><b>.</b></div>
<div class="cell num" style="left:911px;top:336px;line-height:13px">2</div>
<div class="cell num" style="left:1011px;top:336px;line-height:13px">12</div>
<div class="cell num" style="left:1111px;top:336px;line-height:13px">11</div>
<div class="abs" style="left:113px;top:354px;width:40px;height:22px;background:#e4ecf7"></div>
<div class="abs" style="left:113px;top:376px;width:40px;height:1px;background:#9db5d0"></div>
<div class="abs" style="left:153px;top:354px;width:1px;height:23px;background:#9db5d0"></div>
<div class="abs" style="left:154px;top:354px;width:59px;height:22px;background:#fff"></div>
<div class="abs" style="left:214px;top:354px;width:1074px;height:22px;background:#fff"></div>
<div class="abs" style="left:154px;top:376px;width:1134px;height:1px;background:#d0d8e6"></div>
<div class="abs" style="left:213px;top:354px;width:1px;height:23px;background:#d0d8e6"></div>
<div class="abs" style="left:313px;top:354px;width:1px;height:23px;background:#d0d8e6"></div>
<div class="abs" style="left:413px;top:354px;width:1px;height:23px;background:#d0d8e6"></div>
<div class="abs" style="left:473px;top:354px;width:1px;height:23px;background:#d0d8e6"></div>
<div class="abs" style="left:548px;top:354px;width:1px;height:23px;background:#d0d8e6"></div>
<div class="abs" style="left:608px;top:354px;width:1px;height:23px;background:#d0d8e6"></div>
<div class="abs" style="left:708px;top:354px;width:1px;height:23px;background:#d0d8e6"></div>
<div class="abs" style="left:808px;top:354px;width:1px;height:23px;background:#d0d8e6"></div>
<div class="abs" style="left:908px;top:354px;width:1px;height:23px;background:#d0d8e6"></div>
<div class="abs" style="left:1008px;top:354px;width:1px;height:23px;background:#d0d8e6"></div>
<div class="abs" style="left:1108px;top:354px;width:1px;height:23px;background:#d0d8e6"></div>
<div class="abs" style="left:1228px;top:354px;width:1px;height:23px;background:#d0d8e6"></div>
<div class="abs" style="left:1288px;top:354px;width:1px;height:23px;background:#d0d8e6"></div>
<div class="cb" style="left:177px;top:358px"><i></i></div>
<svg class="abs" style="left:178px;top:359px" width="11" height="11"><path d="M2.3 6.3 L4.8 9.3 L8.7 1.9" fill="none" stroke="#3b56a8" stroke-width="2" stroke-linecap="round" stroke-linejoin="round"/></svg>
<div class="btn" style="left:415px;top:355px;width:57px;height:20px">去皮</div>
<div class="btn" style="left:550px;top:355px;width:57px;height:20px">标定</div>
<div class="btn" style="left:1230px;top:355px;width:57px;height:20px">删除</div>
<div class="cell num" style="left:216px;top:359px;line-height:13px">113</div>
<div class="cell num" style="left:319px;top:359px;line-height:13px">01</div>
<div class="cell num" style="left:476px;top:359px;line-height:13px">508852<b>.</b>00</div>
<div class="cell num" style="left:611px;top:359px;line-height:13px">800<b>.</b>00</div>
<div class="cell num" style="left:811px;top:359px;line-height:13px">2125<b>.</b>1000000<b>.</b><b>.</b><b>.</b></div>
<div class="cell num" style="left:911px;top:359px;line-height:13px">2</div>
<div class="cell num" style="left:1011px;top:359px;line-height:13px">13</div>
<div class="cell num" style="left:1111px;top:359px;line-height:13px">12</div>
<div class="abs" style="left:113px;top:377px;width:40px;height:22px;background:#e4ecf7"></div>
<div class="abs" style="left:113px;top:399px;width:40px;height:1px;background:#9db5d0"></div>
<div class="abs" style="left:153px;top:377px;width:1px;height:23px;background:#9db5d0"></div>
<div class="abs" style="left:154px;top:377px;width:59px;height:22px;background:#fff"></div>
<div class="abs" style="left:214px;top:377px;width:1074px;height:22px;background:#fff"></div>
<div class="abs" style="left:154px;top:399px;width:1134px;height:1px;background:#d0d8e6"></div>
<div class="abs" style="left:213px;top:377px;width:1px;height:23px;background:#d0d8e6"></div>
<div class="abs" style="left:313px;top:377px;width:1px;height:23px;background:#d0d8e6"></div>
<div class="abs" style="left:413px;top:377px;width:1px;height:23px;background:#d0d8e6"></div>
<div class="abs" style="left:473px;top:377px;width:1px;height:23px;background:#d0d8e6"></div>
<div class="abs" style="left:548px;top:377px;width:1px;height:23px;background:#d0d8e6"></div>
<div class="abs" style="left:608px;top:377px;width:1px;height:23px;background:#d0d8e6"></div>
<div class="abs" style="left:708px;top:377px;width:1px;height:23px;background:#d0d8e6"></div>
<div class="abs" style="left:808px;top:377px;width:1px;height:23px;background:#d0d8e6"></div>
<div class="abs" style="left:908px;top:377px;width:1px;height:23px;background:#d0d8e6"></div>
<div class="abs" style="left:1008px;top:377px;width:1px;height:23px;background:#d0d8e6"></div>
<div class="abs" style="left:1108px;top:377px;width:1px;height:23px;background:#d0d8e6"></div>
<div class="abs" style="left:1228px;top:377px;width:1px;height:23px;background:#d0d8e6"></div>
<div class="abs" style="left:1288px;top:377px;width:1px;height:23px;background:#d0d8e6"></div>
<div class="cb" style="left:177px;top:381px"><i></i></div>
<svg class="abs" style="left:178px;top:382px" width="11" height="11"><path d="M2.3 6.3 L4.8 9.3 L8.7 1.9" fill="none" stroke="#3b56a8" stroke-width="2" stroke-linecap="round" stroke-linejoin="round"/></svg>
<div class="btn" style="left:415px;top:378px;width:57px;height:20px">去皮</div>
<div class="btn" style="left:550px;top:378px;width:57px;height:20px">标定</div>
<div class="btn" style="left:1230px;top:378px;width:57px;height:20px">删除</div>
<div class="cell num" style="left:216px;top:382px;line-height:13px">114</div>
<div class="cell num" style="left:319px;top:382px;line-height:13px">01</div>
<div class="cell num" style="left:476px;top:382px;line-height:13px">1272251<b>.</b>00</div>
<div class="cell num" style="left:611px;top:382px;line-height:13px">800<b>.</b>00</div>
<div class="cell num" style="left:811px;top:382px;line-height:13px">2330<b>.</b>6800000<b>.</b><b>.</b><b>.</b></div>
<div class="cell num" style="left:911px;top:382px;line-height:13px">2</div>
<div class="cell num" style="left:1011px;top:382px;line-height:13px">14</div>
<div class="cell num" style="left:1111px;top:382px;line-height:13px">13</div>
<div class="abs" style="left:113px;top:400px;width:40px;height:22px;background:#e4ecf7"></div>
<div class="abs" style="left:113px;top:422px;width:40px;height:1px;background:#9db5d0"></div>
<div class="abs" style="left:153px;top:400px;width:1px;height:23px;background:#9db5d0"></div>
<div class="abs" style="left:154px;top:400px;width:59px;height:22px;background:#fff"></div>
<div class="abs" style="left:214px;top:400px;width:1074px;height:22px;background:#fff"></div>
<div class="abs" style="left:154px;top:422px;width:1134px;height:1px;background:#d0d8e6"></div>
<div class="abs" style="left:213px;top:400px;width:1px;height:23px;background:#d0d8e6"></div>
<div class="abs" style="left:313px;top:400px;width:1px;height:23px;background:#d0d8e6"></div>
<div class="abs" style="left:413px;top:400px;width:1px;height:23px;background:#d0d8e6"></div>
<div class="abs" style="left:473px;top:400px;width:1px;height:23px;background:#d0d8e6"></div>
<div class="abs" style="left:548px;top:400px;width:1px;height:23px;background:#d0d8e6"></div>
<div class="abs" style="left:608px;top:400px;width:1px;height:23px;background:#d0d8e6"></div>
<div class="abs" style="left:708px;top:400px;width:1px;height:23px;background:#d0d8e6"></div>
<div class="abs" style="left:808px;top:400px;width:1px;height:23px;background:#d0d8e6"></div>
<div class="abs" style="left:908px;top:400px;width:1px;height:23px;background:#d0d8e6"></div>
<div class="abs" style="left:1008px;top:400px;width:1px;height:23px;background:#d0d8e6"></div>
<div class="abs" style="left:1108px;top:400px;width:1px;height:23px;background:#d0d8e6"></div>
<div class="abs" style="left:1228px;top:400px;width:1px;height:23px;background:#d0d8e6"></div>
<div class="abs" style="left:1288px;top:400px;width:1px;height:23px;background:#d0d8e6"></div>
<div class="cb" style="left:177px;top:404px"><i></i></div>
<svg class="abs" style="left:178px;top:405px" width="11" height="11"><path d="M2.3 6.3 L4.8 9.3 L8.7 1.9" fill="none" stroke="#3b56a8" stroke-width="2" stroke-linecap="round" stroke-linejoin="round"/></svg>
<div class="btn" style="left:415px;top:401px;width:57px;height:20px">去皮</div>
<div class="btn" style="left:550px;top:401px;width:57px;height:20px">标定</div>
<div class="btn" style="left:1230px;top:401px;width:57px;height:20px">删除</div>
<div class="cell num" style="left:216px;top:405px;line-height:13px">115</div>
<div class="cell num" style="left:319px;top:405px;line-height:13px">01</div>
<div class="cell num" style="left:476px;top:405px;line-height:13px">493173<b>.</b>00</div>
<div class="cell num" style="left:611px;top:405px;line-height:13px">800<b>.</b>00</div>
<div class="cell num" style="left:811px;top:405px;line-height:13px">2145<b>.</b>7900000<b>.</b><b>.</b><b>.</b></div>
<div class="cell num" style="left:911px;top:405px;line-height:13px">2</div>
<div class="cell num" style="left:1011px;top:405px;line-height:13px">15</div>
<div class="cell num" style="left:1111px;top:405px;line-height:13px">14</div>
<div class="abs" style="left:113px;top:423px;width:40px;height:22px;background:#e4ecf7"></div>
<div class="abs" style="left:113px;top:445px;width:40px;height:1px;background:#9db5d0"></div>
<div class="abs" style="left:153px;top:423px;width:1px;height:23px;background:#9db5d0"></div>
<div class="abs" style="left:154px;top:423px;width:59px;height:22px;background:#fff"></div>
<div class="abs" style="left:214px;top:423px;width:1074px;height:22px;background:#fff"></div>
<div class="abs" style="left:154px;top:445px;width:1134px;height:1px;background:#d0d8e6"></div>
<div class="abs" style="left:213px;top:423px;width:1px;height:23px;background:#d0d8e6"></div>
<div class="abs" style="left:313px;top:423px;width:1px;height:23px;background:#d0d8e6"></div>
<div class="abs" style="left:413px;top:423px;width:1px;height:23px;background:#d0d8e6"></div>
<div class="abs" style="left:473px;top:423px;width:1px;height:23px;background:#d0d8e6"></div>
<div class="abs" style="left:548px;top:423px;width:1px;height:23px;background:#d0d8e6"></div>
<div class="abs" style="left:608px;top:423px;width:1px;height:23px;background:#d0d8e6"></div>
<div class="abs" style="left:708px;top:423px;width:1px;height:23px;background:#d0d8e6"></div>
<div class="abs" style="left:808px;top:423px;width:1px;height:23px;background:#d0d8e6"></div>
<div class="abs" style="left:908px;top:423px;width:1px;height:23px;background:#d0d8e6"></div>
<div class="abs" style="left:1008px;top:423px;width:1px;height:23px;background:#d0d8e6"></div>
<div class="abs" style="left:1108px;top:423px;width:1px;height:23px;background:#d0d8e6"></div>
<div class="abs" style="left:1228px;top:423px;width:1px;height:23px;background:#d0d8e6"></div>
<div class="abs" style="left:1288px;top:423px;width:1px;height:23px;background:#d0d8e6"></div>
<div class="cb" style="left:177px;top:427px"><i></i></div>
<div class="btn" style="left:415px;top:424px;width:57px;height:20px">去皮</div>
<div class="btn" style="left:550px;top:424px;width:57px;height:20px">标定</div>
<div class="btn" style="left:1230px;top:424px;width:57px;height:20px">删除</div>
<div class="cell num" style="left:216px;top:428px;line-height:13px">201</div>
<div class="cell num" style="left:319px;top:428px;line-height:13px">02</div>
<div class="cell num" style="left:476px;top:428px;line-height:13px">0<b>.</b>00</div>
<div class="cell num" style="left:611px;top:428px;line-height:13px">0<b>.</b>00</div>
<div class="cell num" style="left:811px;top:428px;line-height:13px">1<b>.</b>0000000000000</div>
<div class="cell num" style="left:911px;top:428px;line-height:13px">1</div>
<div class="cell num" style="left:1011px;top:428px;line-height:13px">16</div>
<div class="cell num" style="left:1111px;top:428px;line-height:13px">0</div>
<div class="abs" style="left:113px;top:446px;width:40px;height:22px;background:#e4ecf7"></div>
<div class="abs" style="left:113px;top:468px;width:40px;height:1px;background:#9db5d0"></div>
<div class="abs" style="left:153px;top:446px;width:1px;height:23px;background:#9db5d0"></div>
<div class="abs" style="left:154px;top:446px;width:59px;height:22px;background:#fff"></div>
<div class="abs" style="left:214px;top:446px;width:1074px;height:22px;background:#fff"></div>
<div class="abs" style="left:154px;top:468px;width:1134px;height:1px;background:#d0d8e6"></div>
<div class="abs" style="left:213px;top:446px;width:1px;height:23px;background:#d0d8e6"></div>
<div class="abs" style="left:313px;top:446px;width:1px;height:23px;background:#d0d8e6"></div>
<div class="abs" style="left:413px;top:446px;width:1px;height:23px;background:#d0d8e6"></div>
<div class="abs" style="left:473px;top:446px;width:1px;height:23px;background:#d0d8e6"></div>
<div class="abs" style="left:548px;top:446px;width:1px;height:23px;background:#d0d8e6"></div>
<div class="abs" style="left:608px;top:446px;width:1px;height:23px;background:#d0d8e6"></div>
<div class="abs" style="left:708px;top:446px;width:1px;height:23px;background:#d0d8e6"></div>
<div class="abs" style="left:808px;top:446px;width:1px;height:23px;background:#d0d8e6"></div>
<div class="abs" style="left:908px;top:446px;width:1px;height:23px;background:#d0d8e6"></div>
<div class="abs" style="left:1008px;top:446px;width:1px;height:23px;background:#d0d8e6"></div>
<div class="abs" style="left:1108px;top:446px;width:1px;height:23px;background:#d0d8e6"></div>
<div class="abs" style="left:1228px;top:446px;width:1px;height:23px;background:#d0d8e6"></div>
<div class="abs" style="left:1288px;top:446px;width:1px;height:23px;background:#d0d8e6"></div>
<div class="cb" style="left:177px;top:450px"><i></i></div>
<div class="btn" style="left:415px;top:447px;width:57px;height:20px">去皮</div>
<div class="btn" style="left:550px;top:447px;width:57px;height:20px">标定</div>
<div class="btn" style="left:1230px;top:447px;width:57px;height:20px">删除</div>
<div class="cell num" style="left:216px;top:451px;line-height:13px">202</div>
<div class="cell num" style="left:319px;top:451px;line-height:13px">02</div>
<div class="cell num" style="left:476px;top:451px;line-height:13px">0<b>.</b>00</div>
<div class="cell num" style="left:611px;top:451px;line-height:13px">0<b>.</b>00</div>
<div class="cell num" style="left:811px;top:451px;line-height:13px">1<b>.</b>0000000000000</div>
<div class="cell num" style="left:911px;top:451px;line-height:13px">1</div>
<div class="cell num" style="left:1011px;top:451px;line-height:13px">17</div>
<div class="cell num" style="left:1111px;top:451px;line-height:13px">0</div>
<div class="abs" style="left:113px;top:469px;width:40px;height:22px;background:#e4ecf7"></div>
<div class="abs" style="left:113px;top:491px;width:40px;height:1px;background:#9db5d0"></div>
<div class="abs" style="left:153px;top:469px;width:1px;height:23px;background:#9db5d0"></div>
<div class="abs" style="left:154px;top:469px;width:59px;height:22px;background:#fff"></div>
<div class="abs" style="left:214px;top:469px;width:1074px;height:22px;background:#fff"></div>
<div class="abs" style="left:154px;top:491px;width:1134px;height:1px;background:#d0d8e6"></div>
<div class="abs" style="left:213px;top:469px;width:1px;height:23px;background:#d0d8e6"></div>
<div class="abs" style="left:313px;top:469px;width:1px;height:23px;background:#d0d8e6"></div>
<div class="abs" style="left:413px;top:469px;width:1px;height:23px;background:#d0d8e6"></div>
<div class="abs" style="left:473px;top:469px;width:1px;height:23px;background:#d0d8e6"></div>
<div class="abs" style="left:548px;top:469px;width:1px;height:23px;background:#d0d8e6"></div>
<div class="abs" style="left:608px;top:469px;width:1px;height:23px;background:#d0d8e6"></div>
<div class="abs" style="left:708px;top:469px;width:1px;height:23px;background:#d0d8e6"></div>
<div class="abs" style="left:808px;top:469px;width:1px;height:23px;background:#d0d8e6"></div>
<div class="abs" style="left:908px;top:469px;width:1px;height:23px;background:#d0d8e6"></div>
<div class="abs" style="left:1008px;top:469px;width:1px;height:23px;background:#d0d8e6"></div>
<div class="abs" style="left:1108px;top:469px;width:1px;height:23px;background:#d0d8e6"></div>
<div class="abs" style="left:1228px;top:469px;width:1px;height:23px;background:#d0d8e6"></div>
<div class="abs" style="left:1288px;top:469px;width:1px;height:23px;background:#d0d8e6"></div>
<div class="cb" style="left:177px;top:473px"><i></i></div>
<div class="btn" style="left:415px;top:470px;width:57px;height:20px">去皮</div>
<div class="btn" style="left:550px;top:470px;width:57px;height:20px">标定</div>
<div class="btn" style="left:1230px;top:470px;width:57px;height:20px">删除</div>
<div class="cell num" style="left:216px;top:474px;line-height:13px">203</div>
<div class="cell num" style="left:319px;top:474px;line-height:13px">02</div>
<div class="cell num" style="left:476px;top:474px;line-height:13px">0<b>.</b>00</div>
<div class="cell num" style="left:611px;top:474px;line-height:13px">0<b>.</b>00</div>
<div class="cell num" style="left:811px;top:474px;line-height:13px">1<b>.</b>0000000000000</div>
<div class="cell num" style="left:911px;top:474px;line-height:13px">1</div>
<div class="cell num" style="left:1011px;top:474px;line-height:13px">18</div>
<div class="cell num" style="left:1111px;top:474px;line-height:13px">0</div>
<div class="abs" style="left:113px;top:492px;width:40px;height:22px;background:#e4ecf7"></div>
<div class="abs" style="left:113px;top:514px;width:40px;height:1px;background:#9db5d0"></div>
<div class="abs" style="left:153px;top:492px;width:1px;height:23px;background:#9db5d0"></div>
<div class="abs" style="left:154px;top:492px;width:59px;height:22px;background:#fff"></div>
<div class="abs" style="left:214px;top:492px;width:1074px;height:22px;background:#fff"></div>
<div class="abs" style="left:154px;top:514px;width:1134px;height:1px;background:#d0d8e6"></div>
<div class="abs" style="left:213px;top:492px;width:1px;height:23px;background:#d0d8e6"></div>
<div class="abs" style="left:313px;top:492px;width:1px;height:23px;background:#d0d8e6"></div>
<div class="abs" style="left:413px;top:492px;width:1px;height:23px;background:#d0d8e6"></div>
<div class="abs" style="left:473px;top:492px;width:1px;height:23px;background:#d0d8e6"></div>
<div class="abs" style="left:548px;top:492px;width:1px;height:23px;background:#d0d8e6"></div>
<div class="abs" style="left:608px;top:492px;width:1px;height:23px;background:#d0d8e6"></div>
<div class="abs" style="left:708px;top:492px;width:1px;height:23px;background:#d0d8e6"></div>
<div class="abs" style="left:808px;top:492px;width:1px;height:23px;background:#d0d8e6"></div>
<div class="abs" style="left:908px;top:492px;width:1px;height:23px;background:#d0d8e6"></div>
<div class="abs" style="left:1008px;top:492px;width:1px;height:23px;background:#d0d8e6"></div>
<div class="abs" style="left:1108px;top:492px;width:1px;height:23px;background:#d0d8e6"></div>
<div class="abs" style="left:1228px;top:492px;width:1px;height:23px;background:#d0d8e6"></div>
<div class="abs" style="left:1288px;top:492px;width:1px;height:23px;background:#d0d8e6"></div>
<div class="cb" style="left:177px;top:496px"><i></i></div>
<div class="btn" style="left:415px;top:493px;width:57px;height:20px">去皮</div>
<div class="btn" style="left:550px;top:493px;width:57px;height:20px">标定</div>
<div class="btn" style="left:1230px;top:493px;width:57px;height:20px">删除</div>
<div class="cell num" style="left:216px;top:497px;line-height:13px">204</div>
<div class="cell num" style="left:319px;top:497px;line-height:13px">02</div>
<div class="cell num" style="left:476px;top:497px;line-height:13px">0<b>.</b>00</div>
<div class="cell num" style="left:611px;top:497px;line-height:13px">0<b>.</b>00</div>
<div class="cell num" style="left:811px;top:497px;line-height:13px">1<b>.</b>0000000000000</div>
<div class="cell num" style="left:911px;top:497px;line-height:13px">1</div>
<div class="cell num" style="left:1011px;top:497px;line-height:13px">19</div>
<div class="cell num" style="left:1111px;top:497px;line-height:13px">0</div>
<div class="abs" style="left:113px;top:515px;width:40px;height:22px;background:#e4ecf7"></div>
<div class="abs" style="left:113px;top:537px;width:40px;height:1px;background:#9db5d0"></div>
<div class="abs" style="left:153px;top:515px;width:1px;height:23px;background:#9db5d0"></div>
<div class="abs" style="left:154px;top:515px;width:59px;height:22px;background:#fff"></div>
<div class="abs" style="left:214px;top:515px;width:1074px;height:22px;background:#fff"></div>
<div class="abs" style="left:154px;top:537px;width:1134px;height:1px;background:#d0d8e6"></div>
<div class="abs" style="left:213px;top:515px;width:1px;height:23px;background:#d0d8e6"></div>
<div class="abs" style="left:313px;top:515px;width:1px;height:23px;background:#d0d8e6"></div>
<div class="abs" style="left:413px;top:515px;width:1px;height:23px;background:#d0d8e6"></div>
<div class="abs" style="left:473px;top:515px;width:1px;height:23px;background:#d0d8e6"></div>
<div class="abs" style="left:548px;top:515px;width:1px;height:23px;background:#d0d8e6"></div>
<div class="abs" style="left:608px;top:515px;width:1px;height:23px;background:#d0d8e6"></div>
<div class="abs" style="left:708px;top:515px;width:1px;height:23px;background:#d0d8e6"></div>
<div class="abs" style="left:808px;top:515px;width:1px;height:23px;background:#d0d8e6"></div>
<div class="abs" style="left:908px;top:515px;width:1px;height:23px;background:#d0d8e6"></div>
<div class="abs" style="left:1008px;top:515px;width:1px;height:23px;background:#d0d8e6"></div>
<div class="abs" style="left:1108px;top:515px;width:1px;height:23px;background:#d0d8e6"></div>
<div class="abs" style="left:1228px;top:515px;width:1px;height:23px;background:#d0d8e6"></div>
<div class="abs" style="left:1288px;top:515px;width:1px;height:23px;background:#d0d8e6"></div>
<div class="cb" style="left:177px;top:519px"><i></i></div>
<div class="btn" style="left:415px;top:516px;width:57px;height:20px">去皮</div>
<div class="btn" style="left:550px;top:516px;width:57px;height:20px">标定</div>
<div class="btn" style="left:1230px;top:516px;width:57px;height:20px">删除</div>
<div class="cell num" style="left:216px;top:520px;line-height:13px">205</div>
<div class="cell num" style="left:319px;top:520px;line-height:13px">02</div>
<div class="cell num" style="left:476px;top:520px;line-height:13px">0<b>.</b>00</div>
<div class="cell num" style="left:611px;top:520px;line-height:13px">0<b>.</b>00</div>
<div class="cell num" style="left:811px;top:520px;line-height:13px">1<b>.</b>0000000000000</div>
<div class="cell num" style="left:911px;top:520px;line-height:13px">1</div>
<div class="cell num" style="left:1011px;top:520px;line-height:13px">20</div>
<div class="cell num" style="left:1111px;top:520px;line-height:13px">0</div>
<div class="abs" style="left:113px;top:538px;width:40px;height:22px;background:#e4ecf7"></div>
<div class="abs" style="left:113px;top:560px;width:40px;height:1px;background:#9db5d0"></div>
<div class="abs" style="left:153px;top:538px;width:1px;height:23px;background:#9db5d0"></div>
<div class="abs" style="left:154px;top:538px;width:59px;height:22px;background:#fff"></div>
<div class="abs" style="left:214px;top:538px;width:1074px;height:22px;background:#fff"></div>
<div class="abs" style="left:154px;top:560px;width:1134px;height:1px;background:#d0d8e6"></div>
<div class="abs" style="left:213px;top:538px;width:1px;height:23px;background:#d0d8e6"></div>
<div class="abs" style="left:313px;top:538px;width:1px;height:23px;background:#d0d8e6"></div>
<div class="abs" style="left:413px;top:538px;width:1px;height:23px;background:#d0d8e6"></div>
<div class="abs" style="left:473px;top:538px;width:1px;height:23px;background:#d0d8e6"></div>
<div class="abs" style="left:548px;top:538px;width:1px;height:23px;background:#d0d8e6"></div>
<div class="abs" style="left:608px;top:538px;width:1px;height:23px;background:#d0d8e6"></div>
<div class="abs" style="left:708px;top:538px;width:1px;height:23px;background:#d0d8e6"></div>
<div class="abs" style="left:808px;top:538px;width:1px;height:23px;background:#d0d8e6"></div>
<div class="abs" style="left:908px;top:538px;width:1px;height:23px;background:#d0d8e6"></div>
<div class="abs" style="left:1008px;top:538px;width:1px;height:23px;background:#d0d8e6"></div>
<div class="abs" style="left:1108px;top:538px;width:1px;height:23px;background:#d0d8e6"></div>
<div class="abs" style="left:1228px;top:538px;width:1px;height:23px;background:#d0d8e6"></div>
<div class="abs" style="left:1288px;top:538px;width:1px;height:23px;background:#d0d8e6"></div>
<div class="cb" style="left:177px;top:542px"><i></i></div>
<div class="btn" style="left:415px;top:539px;width:57px;height:20px">去皮</div>
<div class="btn" style="left:550px;top:539px;width:57px;height:20px">标定</div>
<div class="btn" style="left:1230px;top:539px;width:57px;height:20px">删除</div>
<div class="cell num" style="left:216px;top:543px;line-height:13px">206</div>
<div class="cell num" style="left:319px;top:543px;line-height:13px">02</div>
<div class="cell num" style="left:476px;top:543px;line-height:13px">0<b>.</b>00</div>
<div class="cell num" style="left:611px;top:543px;line-height:13px">0<b>.</b>00</div>
<div class="cell num" style="left:811px;top:543px;line-height:13px">1<b>.</b>0000000000000</div>
<div class="cell num" style="left:911px;top:543px;line-height:13px">1</div>
<div class="cell num" style="left:1011px;top:543px;line-height:13px">21</div>
<div class="cell num" style="left:1111px;top:543px;line-height:13px">0</div>
<div class="abs" style="left:113px;top:561px;width:40px;height:22px;background:#e4ecf7"></div>
<div class="abs" style="left:113px;top:583px;width:40px;height:1px;background:#9db5d0"></div>
<div class="abs" style="left:153px;top:561px;width:1px;height:23px;background:#9db5d0"></div>
<div class="abs" style="left:154px;top:561px;width:59px;height:22px;background:#fff"></div>
<div class="abs" style="left:214px;top:561px;width:1074px;height:22px;background:#fff"></div>
<div class="abs" style="left:154px;top:583px;width:1134px;height:1px;background:#d0d8e6"></div>
<div class="abs" style="left:213px;top:561px;width:1px;height:23px;background:#d0d8e6"></div>
<div class="abs" style="left:313px;top:561px;width:1px;height:23px;background:#d0d8e6"></div>
<div class="abs" style="left:413px;top:561px;width:1px;height:23px;background:#d0d8e6"></div>
<div class="abs" style="left:473px;top:561px;width:1px;height:23px;background:#d0d8e6"></div>
<div class="abs" style="left:548px;top:561px;width:1px;height:23px;background:#d0d8e6"></div>
<div class="abs" style="left:608px;top:561px;width:1px;height:23px;background:#d0d8e6"></div>
<div class="abs" style="left:708px;top:561px;width:1px;height:23px;background:#d0d8e6"></div>
<div class="abs" style="left:808px;top:561px;width:1px;height:23px;background:#d0d8e6"></div>
<div class="abs" style="left:908px;top:561px;width:1px;height:23px;background:#d0d8e6"></div>
<div class="abs" style="left:1008px;top:561px;width:1px;height:23px;background:#d0d8e6"></div>
<div class="abs" style="left:1108px;top:561px;width:1px;height:23px;background:#d0d8e6"></div>
<div class="abs" style="left:1228px;top:561px;width:1px;height:23px;background:#d0d8e6"></div>
<div class="abs" style="left:1288px;top:561px;width:1px;height:23px;background:#d0d8e6"></div>
<div class="cb" style="left:177px;top:565px"><i></i></div>
<div class="btn" style="left:415px;top:562px;width:57px;height:20px">去皮</div>
<div class="btn" style="left:550px;top:562px;width:57px;height:20px">标定</div>
<div class="btn" style="left:1230px;top:562px;width:57px;height:20px">删除</div>
<div class="cell num" style="left:216px;top:566px;line-height:13px">301</div>
<div class="cell num" style="left:319px;top:566px;line-height:13px">03</div>
<div class="cell num" style="left:476px;top:566px;line-height:13px">0<b>.</b>00</div>
<div class="cell num" style="left:611px;top:566px;line-height:13px">0<b>.</b>00</div>
<div class="cell num" style="left:811px;top:566px;line-height:13px">1<b>.</b>0000000000000</div>
<div class="cell num" style="left:911px;top:566px;line-height:13px">1</div>
<div class="cell num" style="left:1011px;top:566px;line-height:13px">0</div>
<div class="cell num" style="left:1111px;top:566px;line-height:13px">0</div>
<div class="abs" style="left:113px;top:584px;width:40px;height:22px;background:#e4ecf7"></div>
<div class="abs" style="left:113px;top:606px;width:40px;height:1px;background:#9db5d0"></div>
<div class="abs" style="left:153px;top:584px;width:1px;height:23px;background:#9db5d0"></div>
<div class="abs" style="left:154px;top:584px;width:59px;height:22px;background:#fff"></div>
<div class="abs" style="left:214px;top:584px;width:1074px;height:22px;background:#fff"></div>
<div class="abs" style="left:154px;top:606px;width:1134px;height:1px;background:#d0d8e6"></div>
<div class="abs" style="left:213px;top:584px;width:1px;height:23px;background:#d0d8e6"></div>
<div class="abs" style="left:313px;top:584px;width:1px;height:23px;background:#d0d8e6"></div>
<div class="abs" style="left:413px;top:584px;width:1px;height:23px;background:#d0d8e6"></div>
<div class="abs" style="left:473px;top:584px;width:1px;height:23px;background:#d0d8e6"></div>
<div class="abs" style="left:548px;top:584px;width:1px;height:23px;background:#d0d8e6"></div>
<div class="abs" style="left:608px;top:584px;width:1px;height:23px;background:#d0d8e6"></div>
<div class="abs" style="left:708px;top:584px;width:1px;height:23px;background:#d0d8e6"></div>
<div class="abs" style="left:808px;top:584px;width:1px;height:23px;background:#d0d8e6"></div>
<div class="abs" style="left:908px;top:584px;width:1px;height:23px;background:#d0d8e6"></div>
<div class="abs" style="left:1008px;top:584px;width:1px;height:23px;background:#d0d8e6"></div>
<div class="abs" style="left:1108px;top:584px;width:1px;height:23px;background:#d0d8e6"></div>
<div class="abs" style="left:1228px;top:584px;width:1px;height:23px;background:#d0d8e6"></div>
<div class="abs" style="left:1288px;top:584px;width:1px;height:23px;background:#d0d8e6"></div>
<div class="cb" style="left:177px;top:588px"><i></i></div>
<div class="btn" style="left:415px;top:585px;width:57px;height:20px">去皮</div>
<div class="btn" style="left:550px;top:585px;width:57px;height:20px">标定</div>
<div class="btn" style="left:1230px;top:585px;width:57px;height:20px">删除</div>
<div class="cell num" style="left:216px;top:589px;line-height:13px">401</div>
<div class="cell num" style="left:319px;top:589px;line-height:13px">04</div>
<div class="cell num" style="left:476px;top:589px;line-height:13px">471959<b>.</b>00</div>
<div class="cell num" style="left:611px;top:589px;line-height:13px">1<b>.</b>00</div>
<div class="cell num" style="left:811px;top:589px;line-height:13px">16<b>.</b>000000000<b>.</b><b>.</b><b>.</b></div>
<div class="cell num" style="left:911px;top:589px;line-height:13px">1</div>
<div class="cell num" style="left:1011px;top:589px;line-height:13px">28</div>
<div class="cell num" style="left:1111px;top:589px;line-height:13px">0</div>
<div class="abs" style="left:113px;top:607px;width:40px;height:22px;background:#e4ecf7"></div>
<div class="abs" style="left:113px;top:629px;width:40px;height:1px;background:#9db5d0"></div>
<div class="abs" style="left:153px;top:607px;width:1px;height:23px;background:#9db5d0"></div>
<div class="abs" style="left:154px;top:607px;width:59px;height:22px;background:#fff"></div>
<div class="abs" style="left:214px;top:607px;width:1074px;height:22px;background:#fff"></div>
<div class="abs" style="left:154px;top:629px;width:1134px;height:1px;background:#d0d8e6"></div>
<div class="abs" style="left:213px;top:607px;width:1px;height:23px;background:#d0d8e6"></div>
<div class="abs" style="left:313px;top:607px;width:1px;height:23px;background:#d0d8e6"></div>
<div class="abs" style="left:413px;top:607px;width:1px;height:23px;background:#d0d8e6"></div>
<div class="abs" style="left:473px;top:607px;width:1px;height:23px;background:#d0d8e6"></div>
<div class="abs" style="left:548px;top:607px;width:1px;height:23px;background:#d0d8e6"></div>
<div class="abs" style="left:608px;top:607px;width:1px;height:23px;background:#d0d8e6"></div>
<div class="abs" style="left:708px;top:607px;width:1px;height:23px;background:#d0d8e6"></div>
<div class="abs" style="left:808px;top:607px;width:1px;height:23px;background:#d0d8e6"></div>
<div class="abs" style="left:908px;top:607px;width:1px;height:23px;background:#d0d8e6"></div>
<div class="abs" style="left:1008px;top:607px;width:1px;height:23px;background:#d0d8e6"></div>
<div class="abs" style="left:1108px;top:607px;width:1px;height:23px;background:#d0d8e6"></div>
<div class="abs" style="left:1228px;top:607px;width:1px;height:23px;background:#d0d8e6"></div>
<div class="abs" style="left:1288px;top:607px;width:1px;height:23px;background:#d0d8e6"></div>
<div class="cb" style="left:177px;top:611px"><i></i></div>
<div class="btn" style="left:415px;top:608px;width:57px;height:20px">去皮</div>
<div class="btn" style="left:550px;top:608px;width:57px;height:20px">标定</div>
<div class="btn" style="left:1230px;top:608px;width:57px;height:20px">删除</div>
<div class="cell num" style="left:216px;top:612px;line-height:13px">402</div>
<div class="cell num" style="left:319px;top:612px;line-height:13px">04</div>
<div class="cell num" style="left:476px;top:612px;line-height:13px">0<b>.</b>00</div>
<div class="cell num" style="left:611px;top:612px;line-height:13px">0<b>.</b>00</div>
<div class="cell num" style="left:811px;top:612px;line-height:13px">1<b>.</b>0000000000000</div>
<div class="cell num" style="left:911px;top:612px;line-height:13px">1</div>
<div class="cell num" style="left:1011px;top:612px;line-height:13px">29</div>
<div class="cell num" style="left:1111px;top:612px;line-height:13px">0</div>
<div class="abs" style="left:113px;top:630px;width:40px;height:22px;background:#e4ecf7"></div>
<div class="abs" style="left:113px;top:652px;width:40px;height:1px;background:#9db5d0"></div>
<div class="abs" style="left:153px;top:630px;width:1px;height:23px;background:#9db5d0"></div>
<div class="abs" style="left:154px;top:630px;width:59px;height:22px;background:#fff"></div>
<div class="abs" style="left:214px;top:630px;width:1074px;height:22px;background:#fff"></div>
<div class="abs" style="left:154px;top:652px;width:1134px;height:1px;background:#d0d8e6"></div>
<div class="abs" style="left:213px;top:630px;width:1px;height:23px;background:#d0d8e6"></div>
<div class="abs" style="left:313px;top:630px;width:1px;height:23px;background:#d0d8e6"></div>
<div class="abs" style="left:413px;top:630px;width:1px;height:23px;background:#d0d8e6"></div>
<div class="abs" style="left:473px;top:630px;width:1px;height:23px;background:#d0d8e6"></div>
<div class="abs" style="left:548px;top:630px;width:1px;height:23px;background:#d0d8e6"></div>
<div class="abs" style="left:608px;top:630px;width:1px;height:23px;background:#d0d8e6"></div>
<div class="abs" style="left:708px;top:630px;width:1px;height:23px;background:#d0d8e6"></div>
<div class="abs" style="left:808px;top:630px;width:1px;height:23px;background:#d0d8e6"></div>
<div class="abs" style="left:908px;top:630px;width:1px;height:23px;background:#d0d8e6"></div>
<div class="abs" style="left:1008px;top:630px;width:1px;height:23px;background:#d0d8e6"></div>
<div class="abs" style="left:1108px;top:630px;width:1px;height:23px;background:#d0d8e6"></div>
<div class="abs" style="left:1228px;top:630px;width:1px;height:23px;background:#d0d8e6"></div>
<div class="abs" style="left:1288px;top:630px;width:1px;height:23px;background:#d0d8e6"></div>
<div class="cb" style="left:177px;top:634px"><i></i></div>
<div class="btn" style="left:415px;top:631px;width:57px;height:20px">去皮</div>
<div class="btn" style="left:550px;top:631px;width:57px;height:20px">标定</div>
<div class="btn" style="left:1230px;top:631px;width:57px;height:20px">删除</div>
<div class="cell num" style="left:216px;top:635px;line-height:13px">403</div>
<div class="cell num" style="left:319px;top:635px;line-height:13px">04</div>
<div class="cell num" style="left:476px;top:635px;line-height:13px">0<b>.</b>00</div>
<div class="cell num" style="left:611px;top:635px;line-height:13px">0<b>.</b>00</div>
<div class="cell num" style="left:811px;top:635px;line-height:13px">1<b>.</b>0000000000000</div>
<div class="cell num" style="left:911px;top:635px;line-height:13px">1</div>
<div class="cell num" style="left:1011px;top:635px;line-height:13px">30</div>
<div class="cell num" style="left:1111px;top:635px;line-height:13px">0</div>
<div class="abs" style="left:113px;top:653px;width:40px;height:22px;background:#e4ecf7"></div>
<div class="abs" style="left:113px;top:675px;width:40px;height:1px;background:#9db5d0"></div>
<div class="abs" style="left:153px;top:653px;width:1px;height:23px;background:#9db5d0"></div>
<div class="abs" style="left:154px;top:653px;width:59px;height:22px;background:#fff"></div>
<div class="abs" style="left:214px;top:653px;width:1074px;height:22px;background:#fff"></div>
<div class="abs" style="left:154px;top:675px;width:1134px;height:1px;background:#d0d8e6"></div>
<div class="abs" style="left:213px;top:653px;width:1px;height:23px;background:#d0d8e6"></div>
<div class="abs" style="left:313px;top:653px;width:1px;height:23px;background:#d0d8e6"></div>
<div class="abs" style="left:413px;top:653px;width:1px;height:23px;background:#d0d8e6"></div>
<div class="abs" style="left:473px;top:653px;width:1px;height:23px;background:#d0d8e6"></div>
<div class="abs" style="left:548px;top:653px;width:1px;height:23px;background:#d0d8e6"></div>
<div class="abs" style="left:608px;top:653px;width:1px;height:23px;background:#d0d8e6"></div>
<div class="abs" style="left:708px;top:653px;width:1px;height:23px;background:#d0d8e6"></div>
<div class="abs" style="left:808px;top:653px;width:1px;height:23px;background:#d0d8e6"></div>
<div class="abs" style="left:908px;top:653px;width:1px;height:23px;background:#d0d8e6"></div>
<div class="abs" style="left:1008px;top:653px;width:1px;height:23px;background:#d0d8e6"></div>
<div class="abs" style="left:1108px;top:653px;width:1px;height:23px;background:#d0d8e6"></div>
<div class="abs" style="left:1228px;top:653px;width:1px;height:23px;background:#d0d8e6"></div>
<div class="abs" style="left:1288px;top:653px;width:1px;height:23px;background:#d0d8e6"></div>
<div class="cb" style="left:177px;top:657px"><i></i></div>
<div class="btn" style="left:415px;top:654px;width:57px;height:20px">去皮</div>
<div class="btn" style="left:550px;top:654px;width:57px;height:20px">标定</div>
<div class="btn" style="left:1230px;top:654px;width:57px;height:20px">删除</div>
<div class="cell num" style="left:216px;top:658px;line-height:13px">404</div>
<div class="cell num" style="left:319px;top:658px;line-height:13px">04</div>
<div class="cell num" style="left:476px;top:658px;line-height:13px">0<b>.</b>00</div>
<div class="cell num" style="left:611px;top:658px;line-height:13px">0<b>.</b>00</div>
<div class="cell num" style="left:811px;top:658px;line-height:13px">1<b>.</b>0000000000000</div>
<div class="cell num" style="left:911px;top:658px;line-height:13px">1</div>
<div class="cell num" style="left:1011px;top:658px;line-height:13px">31</div>
<div class="cell num" style="left:1111px;top:658px;line-height:13px">0</div>
<div class="abs" style="left:113px;top:676px;width:40px;height:22px;background:#e4ecf7"></div>
<div class="abs" style="left:113px;top:698px;width:40px;height:1px;background:#9db5d0"></div>
<div class="abs" style="left:153px;top:676px;width:1px;height:23px;background:#9db5d0"></div>
<div class="abs" style="left:154px;top:676px;width:59px;height:22px;background:#fff"></div>
<div class="abs" style="left:214px;top:676px;width:1074px;height:22px;background:#fff"></div>
<div class="abs" style="left:154px;top:698px;width:1134px;height:1px;background:#d0d8e6"></div>
<div class="abs" style="left:213px;top:676px;width:1px;height:23px;background:#d0d8e6"></div>
<div class="abs" style="left:313px;top:676px;width:1px;height:23px;background:#d0d8e6"></div>
<div class="abs" style="left:413px;top:676px;width:1px;height:23px;background:#d0d8e6"></div>
<div class="abs" style="left:473px;top:676px;width:1px;height:23px;background:#d0d8e6"></div>
<div class="abs" style="left:548px;top:676px;width:1px;height:23px;background:#d0d8e6"></div>
<div class="abs" style="left:608px;top:676px;width:1px;height:23px;background:#d0d8e6"></div>
<div class="abs" style="left:708px;top:676px;width:1px;height:23px;background:#d0d8e6"></div>
<div class="abs" style="left:808px;top:676px;width:1px;height:23px;background:#d0d8e6"></div>
<div class="abs" style="left:908px;top:676px;width:1px;height:23px;background:#d0d8e6"></div>
<div class="abs" style="left:1008px;top:676px;width:1px;height:23px;background:#d0d8e6"></div>
<div class="abs" style="left:1108px;top:676px;width:1px;height:23px;background:#d0d8e6"></div>
<div class="abs" style="left:1228px;top:676px;width:1px;height:23px;background:#d0d8e6"></div>
<div class="abs" style="left:1288px;top:676px;width:1px;height:23px;background:#d0d8e6"></div>
<div class="cb" style="left:177px;top:680px"><i></i></div>
<div class="btn" style="left:415px;top:677px;width:57px;height:20px">去皮</div>
<div class="btn" style="left:550px;top:677px;width:57px;height:20px">标定</div>
<div class="btn" style="left:1230px;top:677px;width:57px;height:20px">删除</div>
<div class="abs" style="left:122.5px;top:684.5px;width:5px;height:5px;border-radius:50%;background:#444;box-shadow:0 0 0 1px rgba(255,255,255,0.9)"></div>
</body></html>
